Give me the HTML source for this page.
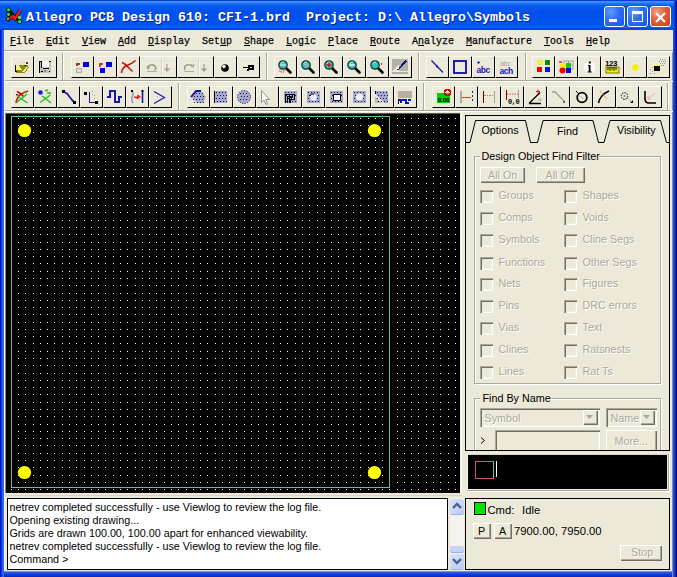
<!DOCTYPE html><html><head><meta charset="utf-8"><style>
*{margin:0;padding:0;box-sizing:border-box}
html,body{width:677px;height:577px;overflow:hidden;background:#ECE9D8}
body{position:relative;font-family:"Liberation Sans",sans-serif}
.a{position:absolute}
.mono{font-family:"Liberation Mono",monospace}
.ui{font-family:"Liberation Sans",sans-serif;font-size:10.75px;color:#000;white-space:pre;line-height:13px}
.dis{color:#ACA899;text-shadow:1px 1px 0 #fff}
</style></head><body>

<div class="a" style="left:0;top:0;width:677px;height:30px;background:linear-gradient(to bottom,#0A40C8 0px,#0A40C8 1px,#3C8CFF 1px,#3C8CFF 3px,#1A6EFA 3px,#1A6EFA 5px,#0858EE 5px,#0656EE 9px,#0050EA 12px,#0052EE 18px,#0056F2 25px,#0060FF 26px,#0060FF 28px,#0048E0 28px,#0048E0 29px,#1A45B0 29px,#1A45B0 30px)"></div>
<div class="a" style="left:0px;top:30px;width:1px;height:547px;background:#0014D0"></div>
<div class="a" style="left:1px;top:30px;width:1px;height:547px;background:#0C30DC"></div>
<div class="a" style="left:2px;top:30px;width:1px;height:547px;background:#1E64FF"></div>
<div class="a" style="left:3px;top:30px;width:1px;height:547px;background:#2A6CE8"></div>
<div class="a" style="left:4px;top:30px;width:1px;height:22px;background:#F4F3EC"></div>
<div class="a" style="left:672px;top:30px;width:1px;height:547px;background:#8090B0"></div>
<div class="a" style="left:673px;top:30px;width:1px;height:547px;background:#2D4EC0"></div>
<div class="a" style="left:674px;top:30px;width:1px;height:547px;background:#1B38CC"></div>
<div class="a" style="left:675px;top:30px;width:1px;height:547px;background:#0A1DB8"></div>
<div class="a" style="left:676px;top:30px;width:1px;height:547px;background:#0012A0"></div>
<div class="a" style="left:674px;top:1px;width:1px;height:29px;background:#0A3AD8"></div>
<div class="a" style="left:675px;top:1px;width:1px;height:29px;background:#0A28C8"></div>
<div class="a" style="left:676px;top:1px;width:1px;height:29px;background:#0012A0"></div>
<div class="a" style="left:4px;top:571px;width:668px;height:1px;background:#7890D0"></div>
<div class="a" style="left:4px;top:572px;width:668px;height:1px;background:#2A58E8"></div>
<div class="a" style="left:4px;top:573px;width:668px;height:1px;background:#1A48E0"></div>
<div class="a" style="left:4px;top:574px;width:668px;height:1px;background:#1040D8"></div>
<div class="a" style="left:4px;top:575px;width:668px;height:1px;background:#0A36CC"></div>
<div class="a" style="left:4px;top:576px;width:668px;height:1px;background:#0A2CC0"></div>
<svg class="a" style="left:4px;top:6px" width="20" height="20" viewBox="0 0 20 20">
<path d="M4.5 3.8L15.6 15.6M4.5 8.5L9 8.5" stroke="#081808" stroke-width="3" fill="none"/>
<path d="M3 14.5L9 10L11 12.5L16 4.5" stroke="#300818" stroke-width="3.6" fill="none"/>
<path d="M3 14.5L9 10L11 12.5L16 4.5" stroke="#F02010" stroke-width="2.2" fill="none"/>
<circle cx="4.5" cy="3.8" r="2" fill="#30E040" stroke="#000" stroke-width="0.8"/><circle cx="4.5" cy="8.5" r="2" fill="#30E040" stroke="#000" stroke-width="0.8"/><circle cx="4" cy="12.8" r="1.7" fill="#80D040" stroke="#000" stroke-width="0.8"/>
<circle cx="15.5" cy="11.4" r="1.7" fill="#80D040"/><circle cx="15.6" cy="15.6" r="2.1" fill="#30E040" stroke="#000" stroke-width="0.8"/>
</svg>
<div class="a mono" style="left:26px;top:8px;font-size:13.33px;font-weight:bold;color:#fff;white-space:pre;line-height:20px;text-shadow:1px 1px 0 #0A1E8C">Allegro PCB Design 610: CFI-1.brd  Project: D:\ Allegro\Symbols</div>
<div class="a" style="left:604px;top:6px;width:21px;height:21px;border:1px solid #fff;border-radius:3px;background:radial-gradient(circle at 30% 25%,#5C9BFF 0,#2D6EF5 45%,#1A55E0 100%)"><div class="a" style="left:4px;top:12px;width:8px;height:3px;background:#fff"></div></div>
<div class="a" style="left:627px;top:6px;width:21px;height:21px;border:1px solid #fff;border-radius:3px;background:radial-gradient(circle at 30% 25%,#5C9BFF 0,#2D6EF5 45%,#1A55E0 100%)"><div class="a" style="left:4px;top:4px;width:11px;height:11px;border:1px solid #fff;border-top-width:3px"></div></div>
<div class="a" style="left:650px;top:6px;width:21px;height:21px;border:1px solid #fff;border-radius:3px;background:radial-gradient(circle at 30% 25%,#F0A080 0,#E0603A 45%,#C8401E 100%)"><svg class="a" style="left:4px;top:5px" width="11" height="11"><path d="M1 1 L10 10 M10 1 L1 10" stroke="#fff" stroke-width="2.2"/></svg></div>
<div class="a" style="left:4px;top:30px;width:669px;height:20px;background:#ECE9D8"></div>
<div class="a" style="left:4px;top:50px;width:669px;height:1px;background:#ACA899"></div>
<div class="a" style="left:4px;top:51px;width:669px;height:1px;background:#fff"></div>
<div class="a mono" style="left:10px;top:33.8px;font-size:11px;line-height:14px;color:#000;white-space:pre;transform:scaleX(0.90909);transform-origin:0 0;-webkit-text-stroke:0.25px #000"><span style="text-decoration:underline">F</span>ile</div>
<div class="a mono" style="left:46px;top:33.8px;font-size:11px;line-height:14px;color:#000;white-space:pre;transform:scaleX(0.90909);transform-origin:0 0;-webkit-text-stroke:0.25px #000"><span style="text-decoration:underline">E</span>dit</div>
<div class="a mono" style="left:82px;top:33.8px;font-size:11px;line-height:14px;color:#000;white-space:pre;transform:scaleX(0.90909);transform-origin:0 0;-webkit-text-stroke:0.25px #000"><span style="text-decoration:underline">V</span>iew</div>
<div class="a mono" style="left:118px;top:33.8px;font-size:11px;line-height:14px;color:#000;white-space:pre;transform:scaleX(0.90909);transform-origin:0 0;-webkit-text-stroke:0.25px #000"><span style="text-decoration:underline">A</span>dd</div>
<div class="a mono" style="left:148px;top:33.8px;font-size:11px;line-height:14px;color:#000;white-space:pre;transform:scaleX(0.90909);transform-origin:0 0;-webkit-text-stroke:0.25px #000"><span style="text-decoration:underline">D</span>isplay</div>
<div class="a mono" style="left:202px;top:33.8px;font-size:11px;line-height:14px;color:#000;white-space:pre;transform:scaleX(0.90909);transform-origin:0 0;-webkit-text-stroke:0.25px #000">Set<span style="text-decoration:underline">u</span>p</div>
<div class="a mono" style="left:244px;top:33.8px;font-size:11px;line-height:14px;color:#000;white-space:pre;transform:scaleX(0.90909);transform-origin:0 0;-webkit-text-stroke:0.25px #000"><span style="text-decoration:underline">S</span>hape</div>
<div class="a mono" style="left:286px;top:33.8px;font-size:11px;line-height:14px;color:#000;white-space:pre;transform:scaleX(0.90909);transform-origin:0 0;-webkit-text-stroke:0.25px #000"><span style="text-decoration:underline">L</span>ogic</div>
<div class="a mono" style="left:328px;top:33.8px;font-size:11px;line-height:14px;color:#000;white-space:pre;transform:scaleX(0.90909);transform-origin:0 0;-webkit-text-stroke:0.25px #000"><span style="text-decoration:underline">P</span>lace</div>
<div class="a mono" style="left:370px;top:33.8px;font-size:11px;line-height:14px;color:#000;white-space:pre;transform:scaleX(0.90909);transform-origin:0 0;-webkit-text-stroke:0.25px #000"><span style="text-decoration:underline">R</span>oute</div>
<div class="a mono" style="left:412px;top:33.8px;font-size:11px;line-height:14px;color:#000;white-space:pre;transform:scaleX(0.90909);transform-origin:0 0;-webkit-text-stroke:0.25px #000">A<span style="text-decoration:underline">n</span>alyze</div>
<div class="a mono" style="left:466px;top:33.8px;font-size:11px;line-height:14px;color:#000;white-space:pre;transform:scaleX(0.90909);transform-origin:0 0;-webkit-text-stroke:0.25px #000"><span style="text-decoration:underline">M</span>anufacture</div>
<div class="a mono" style="left:544px;top:33.8px;font-size:11px;line-height:14px;color:#000;white-space:pre;transform:scaleX(0.90909);transform-origin:0 0;-webkit-text-stroke:0.25px #000"><span style="text-decoration:underline">T</span>ools</div>
<div class="a mono" style="left:586px;top:33.8px;font-size:11px;line-height:14px;color:#000;white-space:pre;transform:scaleX(0.90909);transform-origin:0 0;-webkit-text-stroke:0.25px #000"><span style="text-decoration:underline">H</span>elp</div>
<div class="a" style="left:4px;top:80px;width:669px;height:1px;background:#ACA899"></div>
<div class="a" style="left:4px;top:81px;width:669px;height:1px;background:#fff"></div>
<div class="a" style="left:4px;top:110px;width:669px;height:1px;background:#ACA899"></div>
<div class="a" style="left:4px;top:111px;width:669px;height:1px;background:#fff"></div>
<div class="a" style="left:62px;top:53px;width:1px;height:27px;background:#ACA899"></div>
<div class="a" style="left:63px;top:53px;width:1px;height:27px;background:#fff"></div>
<div class="a" style="left:266px;top:53px;width:1px;height:27px;background:#ACA899"></div>
<div class="a" style="left:267px;top:53px;width:1px;height:27px;background:#fff"></div>
<div class="a" style="left:418px;top:53px;width:1px;height:27px;background:#ACA899"></div>
<div class="a" style="left:419px;top:53px;width:1px;height:27px;background:#fff"></div>
<div class="a" style="left:525px;top:53px;width:1px;height:27px;background:#ACA899"></div>
<div class="a" style="left:526px;top:53px;width:1px;height:27px;background:#fff"></div>
<div class="a" style="left:178px;top:83px;width:1px;height:27px;background:#ACA899"></div>
<div class="a" style="left:179px;top:83px;width:1px;height:27px;background:#fff"></div>
<div class="a" style="left:423px;top:83px;width:1px;height:27px;background:#ACA899"></div>
<div class="a" style="left:424px;top:83px;width:1px;height:27px;background:#fff"></div>
<div class="a" style="left:667px;top:83px;width:1px;height:27px;background:#ACA899"></div>
<div class="a" style="left:668px;top:83px;width:1px;height:27px;background:#fff"></div>
<div class="a" style="left:11px;top:56px;width:23px;height:22px;border-left:1px solid #F7F6F0;border-top:1px solid #F7F6F0;border-right:1px solid #000;border-bottom:1px solid #000;background:#ECE9D8"><svg class="a" style="left:-1px;top:-1px" width="23" height="22" viewBox="0 0 23 22" shape-rendering="crispEdges"><path d="M5 9h11l1 1v1h1l-4 6H5z" fill="#8A8A08"/><path d="M5 9h3l3 5H5z" fill="#F4F08C"/><path d="M11 16l4-5h2l-3 5z" fill="#E8E890"/><rect x="4" y="9" width="1" height="7" fill="#000"/><rect x="4" y="15" width="2" height="1" fill="#000"/><rect x="13" y="9" width="2" height="1" fill="#303000"/><rect x="15" y="6" width="2" height="2" fill="#603030"/><rect x="10" y="6" width="4" height="1" fill="#F0C8C8"/></svg></div>
<div class="a" style="left:34px;top:56px;width:23px;height:22px;border-left:1px solid #F7F6F0;border-top:1px solid #F7F6F0;border-right:1px solid #000;border-bottom:1px solid #000;background:#ECE9D8"><svg class="a" style="left:-1px;top:-1px" width="23" height="22" viewBox="0 0 23 22" shape-rendering="crispEdges"><rect x="6" y="5" width="11" height="12" fill="#C4C2BA"/><rect x="8" y="5" width="7" height="6" fill="#FAFAFA"/><rect x="5" y="5" width="1" height="12" fill="#000"/><rect x="7" y="5" width="1" height="7" fill="#000"/><rect x="6" y="5" width="2" height="1" fill="#000"/><rect x="15" y="5" width="2" height="1" fill="#000"/><rect x="9" y="12" width="6" height="1" fill="#000"/><rect x="7" y="15" width="2" height="1" fill="#000"/><rect x="15" y="15" width="1" height="1" fill="#000"/><rect x="10" y="14" width="2" height="2" fill="#8A8880"/></svg></div>
<div class="a" style="left:71px;top:56px;width:23px;height:22px;border-left:1px solid #F7F6F0;border-top:1px solid #F7F6F0;border-right:1px solid #000;border-bottom:1px solid #000;background:#ECE9D8"><svg class="a" style="left:-1px;top:-1px" width="23" height="22" viewBox="0 0 23 22" shape-rendering="crispEdges"><rect x="12" y="6" width="6" height="5" fill="#0000F0"/><path d="M6 10V8h3" stroke="#904030" stroke-width="1.4" fill="none"/><rect x="5" y="12" width="6" height="5" fill="#B0ADA0"/><rect x="6" y="13" width="4" height="3" fill="#E0DDD0"/></svg></div>
<div class="a" style="left:94px;top:56px;width:23px;height:22px;border-left:1px solid #F7F6F0;border-top:1px solid #F7F6F0;border-right:1px solid #000;border-bottom:1px solid #000;background:#ECE9D8"><svg class="a" style="left:-1px;top:-1px" width="23" height="22" viewBox="0 0 23 22" shape-rendering="crispEdges"><rect x="12" y="6" width="6" height="5" fill="#0000F0"/><rect x="6" y="12" width="5" height="5" fill="#0000F0"/><path d="M6 11V8h3" stroke="#C04030" stroke-width="1.4" fill="none"/></svg></div>
<div class="a" style="left:117px;top:56px;width:23px;height:22px;border-left:1px solid #F7F6F0;border-top:1px solid #F7F6F0;border-right:1px solid #000;border-bottom:1px solid #000;background:#ECE9D8"><svg class="a" style="left:-1px;top:-1px" width="23" height="22" viewBox="0 0 23 22"><path d="M4.5 17Q5 11 11 9Q15 7.5 18.5 4.5" stroke="#C01010" stroke-width="1.6" fill="none"/><path d="M5 6.5Q9 8 12 12L15.5 15.5" stroke="#C01010" stroke-width="1.4" fill="none"/></svg></div>
<div class="a" style="left:140px;top:56px;width:37px;height:22px;border-left:1px solid #F7F6F0;border-top:1px solid #F7F6F0;border-right:1px solid #000;border-bottom:1px solid #000;background:#ECE9D8"><svg class="a" style="left:-1px;top:-1px" width="37" height="22" viewBox="0 0 37 22"><path d="M8 13.5Q7 9.5 11 9Q14 8.5 15.5 11Q16.5 13 14.5 14" stroke="#A09E90" stroke-width="1.6" fill="none"/><path d="M6.5 10.5l2 1.5l1.5-2.5" stroke="#A09E90" stroke-width="1.2" fill="none"/><path d="M7 15.5h10" stroke="#B0AEA0" stroke-width="1"/><rect x="21" y="3" width="1" height="17" fill="#D6D3C4"/><rect x="22" y="3" width="1" height="17" fill="#F6F5F0"/><path d="M27 8v5M25 13h4l-2 2z" stroke="#A09E90" stroke-width="1.2" fill="#A09E90"/></svg></div>
<div class="a" style="left:177px;top:56px;width:37px;height:22px;border-left:1px solid #F7F6F0;border-top:1px solid #F7F6F0;border-right:1px solid #000;border-bottom:1px solid #000;background:#ECE9D8"><svg class="a" style="left:-1px;top:-1px" width="37" height="22" viewBox="0 0 37 22"><path d="M8 14Q6.5 10 10 9Q13.5 8 15.5 10.5" stroke="#A09E90" stroke-width="1.6" fill="none"/><path d="M14 8.5l2 2.5l1-3" stroke="#A09E90" stroke-width="1.2" fill="none"/><path d="M7 15.5h10" stroke="#B0AEA0" stroke-width="1"/><rect x="21" y="3" width="1" height="17" fill="#D6D3C4"/><rect x="22" y="3" width="1" height="17" fill="#F6F5F0"/><path d="M27 8v5M25 13h4l-2 2z" stroke="#A09E90" stroke-width="1.2" fill="#A09E90"/></svg></div>
<div class="a" style="left:214px;top:56px;width:23px;height:22px;border-left:1px solid #F7F6F0;border-top:1px solid #F7F6F0;border-right:1px solid #000;border-bottom:1px solid #000;background:#ECE9D8"><svg class="a" style="left:-1px;top:-1px" width="23" height="22" viewBox="0 0 23 22"><circle cx="11" cy="12" r="3.8" fill="#000"/><circle cx="10" cy="10.5" r="1.8" fill="#fff"/></svg></div>
<div class="a" style="left:237px;top:56px;width:23px;height:22px;border-left:1px solid #F7F6F0;border-top:1px solid #F7F6F0;border-right:1px solid #000;border-bottom:1px solid #000;background:#ECE9D8"><svg class="a" style="left:-1px;top:-1px" width="23" height="22" viewBox="0 0 23 22" shape-rendering="crispEdges"><rect x="6" y="11" width="5" height="1" fill="#000"/><rect x="11" y="9" width="6" height="5" fill="#000"/><rect x="13" y="11" width="2" height="1" fill="#ECE9D8"/><rect x="10" y="13" width="2" height="2" fill="#000"/></svg></div>
<div class="a" style="left:274px;top:56px;width:23px;height:22px;border-left:1px solid #F7F6F0;border-top:1px solid #F7F6F0;border-right:1px solid #000;border-bottom:1px solid #000;background:#ECE9D8"><svg class="a" style="left:-1px;top:-1px" width="23" height="22" viewBox="0 0 23 22"><path d="M12 12L16.5 16.5" stroke="#000" stroke-width="2.6" stroke-linecap="round"/><circle cx="9" cy="9" r="4.2" fill="#2EC8B8" stroke="#103030" stroke-width="1.2"/><path d="M6.5 7.5Q8 5.8 10 6" stroke="#B8F8F0" stroke-width="1" fill="none"/><rect x="6" y="12" width="4" height="4" fill="none" stroke="#D02020" stroke-width="1" stroke-dasharray="1 1"/><path d="M6 9h6" stroke="#C0E8F0" stroke-width="1.4"/></svg></div>
<div class="a" style="left:297px;top:56px;width:23px;height:22px;border-left:1px solid #F7F6F0;border-top:1px solid #F7F6F0;border-right:1px solid #000;border-bottom:1px solid #000;background:#ECE9D8"><svg class="a" style="left:-1px;top:-1px" width="23" height="22" viewBox="0 0 23 22"><path d="M12 12L16.5 16.5" stroke="#000" stroke-width="2.6" stroke-linecap="round"/><circle cx="9" cy="9" r="4.2" fill="#2EC8B8" stroke="#103030" stroke-width="1.2"/><path d="M6.5 7.5Q8 5.8 10 6" stroke="#B8F8F0" stroke-width="1" fill="none"/><path d="M8 7.5v3M10 7.5v3" stroke="#F0A0C0" stroke-width="1"/></svg></div>
<div class="a" style="left:320px;top:56px;width:23px;height:22px;border-left:1px solid #F7F6F0;border-top:1px solid #F7F6F0;border-right:1px solid #000;border-bottom:1px solid #000;background:#ECE9D8"><svg class="a" style="left:-1px;top:-1px" width="23" height="22" viewBox="0 0 23 22"><path d="M12 12L16.5 16.5" stroke="#000" stroke-width="2.6" stroke-linecap="round"/><circle cx="9" cy="9" r="4.2" fill="#2EC8B8" stroke="#103030" stroke-width="1.2"/><path d="M6.5 7.5Q8 5.8 10 6" stroke="#B8F8F0" stroke-width="1" fill="none"/><path d="M9 6.5v5M6.5 9h5" stroke="#D01010" stroke-width="1.5"/></svg></div>
<div class="a" style="left:343px;top:56px;width:23px;height:22px;border-left:1px solid #F7F6F0;border-top:1px solid #F7F6F0;border-right:1px solid #000;border-bottom:1px solid #000;background:#ECE9D8"><svg class="a" style="left:-1px;top:-1px" width="23" height="22" viewBox="0 0 23 22"><path d="M12 12L16.5 16.5" stroke="#000" stroke-width="2.6" stroke-linecap="round"/><circle cx="9" cy="9" r="4.2" fill="#2EC8B8" stroke="#103030" stroke-width="1.2"/><path d="M6.5 7.5Q8 5.8 10 6" stroke="#B8F8F0" stroke-width="1" fill="none"/><path d="M6.3 9h5.4" stroke="#F0F0F0" stroke-width="1.6"/></svg></div>
<div class="a" style="left:366px;top:56px;width:23px;height:22px;border-left:1px solid #F7F6F0;border-top:1px solid #F7F6F0;border-right:1px solid #000;border-bottom:1px solid #000;background:#ECE9D8"><svg class="a" style="left:-1px;top:-1px" width="23" height="22" viewBox="0 0 23 22"><path d="M12 12L16.5 16.5" stroke="#000" stroke-width="2.6" stroke-linecap="round"/><circle cx="9" cy="9" r="4.2" fill="#2EC8B8" stroke="#103030" stroke-width="1.2"/><path d="M6.5 7.5Q8 5.8 10 6" stroke="#B8F8F0" stroke-width="1" fill="none"/><rect x="15" y="7" width="1" height="2" fill="#E02020"/></svg></div>
<div class="a" style="left:389px;top:56px;width:23px;height:22px;border-left:1px solid #F7F6F0;border-top:1px solid #F7F6F0;border-right:1px solid #000;border-bottom:1px solid #000;background:#ECE9D8"><svg class="a" style="left:-1px;top:-1px" width="23" height="22" viewBox="0 0 23 22" shape-rendering="crispEdges"><rect x="3" y="3" width="16" height="12" fill="#B4B2A8"/><path d="M3 15L10 8V15Z" fill="#F8F8E8"/><path d="M3 15L7 11V15Z" fill="#ECE9D8"/><rect x="3" y="16" width="16" height="2" fill="#B0AEA2"/><path d="M9 12l3-3l1 1l-3 3zM12 9l4-5l2 2l-5 4z" fill="#101080"/><path d="M8 13l2 1" stroke="#101080"/></svg></div>
<div class="a" style="left:426px;top:56px;width:23px;height:22px;border-left:1px solid #F7F6F0;border-top:1px solid #F7F6F0;border-right:1px solid #000;border-bottom:1px solid #000;background:#ECE9D8"><svg class="a" style="left:-1px;top:-1px" width="23" height="22" viewBox="0 0 23 22"><path d="M5.5 4.5L17 16.5" stroke="#2020B0" stroke-width="1.4"/><rect x="10" y="9.5" width="2" height="2" fill="#2020B0"/></svg></div>
<div class="a" style="left:449px;top:56px;width:23px;height:22px;border-left:1px solid #F7F6F0;border-top:1px solid #F7F6F0;border-right:1px solid #000;border-bottom:1px solid #000;background:#ECE9D8"><svg class="a" style="left:-1px;top:-1px" width="23" height="22" viewBox="0 0 23 22" shape-rendering="crispEdges"><rect x="5" y="5" width="12" height="12" fill="none" stroke="#2020A8" stroke-width="2"/></svg></div>
<div class="a" style="left:472px;top:56px;width:23px;height:22px;border-left:1px solid #F7F6F0;border-top:1px solid #F7F6F0;border-right:1px solid #000;border-bottom:1px solid #000;background:#ECE9D8"><svg class="a" style="left:-1px;top:-1px" width="23" height="22" viewBox="0 0 23 22"><text x="4.5" y="17" font-family="Liberation Sans" font-weight="bold" font-size="8.5" fill="#1818C0" letter-spacing="-0.5" transform="translate(0,-1.5) scale(1,1.1)">abc</text><path d="M6.5 5l1.5 1.5L6.5 8L5 6.5z" fill="#1818C0"/></svg></div>
<div class="a" style="left:495px;top:56px;width:23px;height:22px;border-left:1px solid #F7F6F0;border-top:1px solid #F7F6F0;border-right:1px solid #000;border-bottom:1px solid #000;background:#ECE9D8"><svg class="a" style="left:-1px;top:-1px" width="23" height="22" viewBox="0 0 23 22"><text x="5" y="10" font-family="Liberation Sans" font-size="7" fill="#A8A698" letter-spacing="-0.3">abc</text><text x="4.5" y="18" font-family="Liberation Sans" font-weight="bold" font-size="8.5" fill="#1818C0" letter-spacing="-0.5">ach</text></svg></div>
<div class="a" style="left:532px;top:56px;width:23px;height:22px;border-left:1px solid #F7F6F0;border-top:1px solid #F7F6F0;border-right:1px solid #000;border-bottom:1px solid #000;background:#ECE9D8"><svg class="a" style="left:-1px;top:-1px" width="23" height="22" viewBox="0 0 23 22" shape-rendering="crispEdges"><rect x="5" y="4" width="6" height="5" fill="#E8F040"/><rect x="13" y="4" width="5" height="5" fill="#109010"/><rect x="15" y="6" width="1" height="1" fill="#003000"/><rect x="5" y="11" width="5" height="5" fill="#F00000"/><rect x="13" y="11" width="5" height="5" fill="#0010F0"/></svg></div>
<div class="a" style="left:555px;top:56px;width:23px;height:22px;border-left:1px solid #F7F6F0;border-top:1px solid #F7F6F0;border-right:1px solid #000;border-bottom:1px solid #000;background:#ECE9D8"><svg class="a" style="left:-1px;top:-1px" width="23" height="22" viewBox="0 0 23 22"><rect x="9" y="5" width="9" height="8" fill="#E8E8E8" stroke="#A0A0A0" stroke-width="1"/><path d="M9 9h9M13.5 5v8" stroke="#A0A0A0"/><rect x="5" y="8" width="6" height="5" fill="#F0F020"/><rect x="11" y="7" width="5" height="6" fill="#20C020"/><circle cx="7.5" cy="14.5" r="3" fill="#F00000"/><rect x="11" y="12" width="5" height="5" fill="#0000F0"/><path d="M4 6h3" stroke="#D02020" stroke-width="1.4"/></svg></div>
<div class="a" style="left:578px;top:56px;width:23px;height:22px;border-left:1px solid #F7F6F0;border-top:1px solid #F7F6F0;border-right:1px solid #000;border-bottom:1px solid #000;background:#ECE9D8"><svg class="a" style="left:-1px;top:-1px" width="23" height="22" viewBox="0 0 23 22"><circle cx="11.5" cy="11.5" r="6" fill="#FAFAF6"/><path d="M10 9h2.5v6.5h1.2v1h-4.2v-1h1.2v-5.5h-0.7z" fill="#000"/><rect x="10.8" y="5.5" width="2" height="2" fill="#000"/></svg></div>
<div class="a" style="left:601px;top:56px;width:23px;height:22px;border-left:1px solid #F7F6F0;border-top:1px solid #F7F6F0;border-right:1px solid #000;border-bottom:1px solid #000;background:#ECE9D8"><svg class="a" style="left:-1px;top:-1px" width="23" height="22" viewBox="0 0 23 22"><text x="4" y="10" font-family="Liberation Sans" font-weight="bold" font-size="8" fill="#000" letter-spacing="-0.4">123</text><rect x="5" y="11" width="13" height="6" fill="#F0F000" stroke="#606000" stroke-width="0.8"/><path d="M7 11v3M9 11v4M11 11v3M13 11v4M15 11v3" stroke="#000" stroke-width="0.9"/></svg></div>
<div class="a" style="left:624px;top:56px;width:23px;height:22px;border-left:1px solid #F7F6F0;border-top:1px solid #F7F6F0;border-right:1px solid #000;border-bottom:1px solid #000;background:#ECE9D8"><svg class="a" style="left:-1px;top:-1px" width="23" height="22" viewBox="0 0 23 22"><circle cx="11.5" cy="11.5" r="3.3" fill="#F0F000"/></svg></div>
<div class="a" style="left:647px;top:56px;width:23px;height:22px;border-left:1px solid #F7F6F0;border-top:1px solid #F7F6F0;border-right:1px solid #000;border-bottom:1px solid #000;background:#ECE9D8"><svg class="a" style="left:-1px;top:-1px" width="23" height="22" viewBox="0 0 23 22"><circle cx="10" cy="12" r="4.5" fill="#F8F070" opacity="0.8"/><path d="M13 3h1v1h-1zM15 3h1v1h-1zM17 3h1v1h-1zM12 5h1v1h-1zM14 5h1v1h-1zM16 5h1v1h-1zM18 5h1v1h-1zM13 7h1v1h-1zM15 7h1v1h-1zM17 7h1v1h-1zM14 9h1v1h-1zM16 9h1v1h-1zM3 13h1v1h-1zM5 15h1v1h-1zM7 17h1v1h-1zM3 17h1v1h-1zM5 11h1v1h-1z" fill="#909090"/><rect x="7" y="10" width="6" height="5" fill="#000"/></svg></div>
<div class="a" style="left:11px;top:86px;width:23px;height:22px;border-left:1px solid #F7F6F0;border-top:1px solid #F7F6F0;border-right:1px solid #000;border-bottom:1px solid #000;background:#ECE9D8"><svg class="a" style="left:-1px;top:-1px" width="23" height="22" viewBox="0 0 23 22"><path d="M5 17Q6 11 10 8Q14 6 17 5" stroke="#D01010" stroke-width="1.6" fill="none"/><path d="M6 5.5l4 2.5 3 3" stroke="#D01010" stroke-width="1.6" fill="none"/><path d="M5.5 16.5L16 8M7 10.5L16.5 17" stroke="#20C020" stroke-width="1.5" fill="none"/><path d="M12 6.5l3 -1" stroke="#20C020" stroke-width="1.3"/><rect x="5" y="8" width="2" height="1.5" fill="#303060"/></svg></div>
<div class="a" style="left:34px;top:86px;width:23px;height:22px;border-left:1px solid #F7F6F0;border-top:1px solid #F7F6F0;border-right:1px solid #000;border-bottom:1px solid #000;background:#ECE9D8"><svg class="a" style="left:-1px;top:-1px" width="23" height="22" viewBox="0 0 23 22"><circle cx="6.5" cy="6.5" r="2.3" fill="#1020E0"/><path d="M6 16.5L16.5 9M8 10L17 17M11 5l3-1M13 7l4 0" stroke="#20C020" stroke-width="1.5" fill="none"/></svg></div>
<div class="a" style="left:57px;top:86px;width:23px;height:22px;border-left:1px solid #F7F6F0;border-top:1px solid #F7F6F0;border-right:1px solid #000;border-bottom:1px solid #000;background:#ECE9D8"><svg class="a" style="left:-1px;top:-1px" width="23" height="22" viewBox="0 0 23 22"><rect x="5" y="4" width="3" height="3" fill="#000"/><path d="M7 6L10 7.5L15 14L17 16" stroke="#1818B0" stroke-width="1.8" fill="none"/><rect x="16" y="15" width="3" height="3" fill="#000"/></svg></div>
<div class="a" style="left:80px;top:86px;width:23px;height:22px;border-left:1px solid #F7F6F0;border-top:1px solid #F7F6F0;border-right:1px solid #000;border-bottom:1px solid #000;background:#ECE9D8"><svg class="a" style="left:-1px;top:-1px" width="23" height="22" viewBox="0 0 23 22" shape-rendering="crispEdges"><rect x="4" y="6" width="3" height="3" fill="#000"/><path d="M9 6h1v10h5v1H9z" fill="#1818B0"/><rect x="15" y="15" width="3" height="3" fill="#000"/><path d="M12 5h1v1h-1zM12 8h1v1h-1zM14 9h1v1h-1zM14 12h1v1h-1z" fill="#A0A0A0"/></svg></div>
<div class="a" style="left:103px;top:86px;width:23px;height:22px;border-left:1px solid #F7F6F0;border-top:1px solid #F7F6F0;border-right:1px solid #000;border-bottom:1px solid #000;background:#ECE9D8"><svg class="a" style="left:-1px;top:-1px" width="23" height="22" viewBox="0 0 23 22" shape-rendering="crispEdges"><path d="M4 11h3V5h5v11h4v-5h3" stroke="#1818B0" stroke-width="2" fill="none"/></svg></div>
<div class="a" style="left:126px;top:86px;width:23px;height:22px;border-left:1px solid #F7F6F0;border-top:1px solid #F7F6F0;border-right:1px solid #000;border-bottom:1px solid #000;background:#ECE9D8"><svg class="a" style="left:-1px;top:-1px" width="23" height="22" viewBox="0 0 23 22"><path d="M6 4.5Q8 8 6 11Q5 14 7 17" stroke="#8090C0" stroke-width="1.4" fill="none"/><path d="M16.5 5v12" stroke="#1818B0" stroke-width="1.6"/><path d="M8 11h6l-2-1.5v3z" stroke="#E02020" stroke-width="1.2" fill="#E02020"/><rect x="5" y="4" width="2" height="2" fill="#000"/><rect x="15.5" y="4" width="2" height="2" fill="#000"/></svg></div>
<div class="a" style="left:149px;top:86px;width:23px;height:22px;border-left:1px solid #F7F6F0;border-top:1px solid #F7F6F0;border-right:1px solid #000;border-bottom:1px solid #000;background:#ECE9D8"><svg class="a" style="left:-1px;top:-1px" width="23" height="22" viewBox="0 0 23 22"><path d="M5 5.5L15.5 11.5L5 17.5" stroke="#1818B0" stroke-width="1.2" fill="none"/><rect x="8" y="10" width="1" height="1" fill="#A0A0C0"/></svg></div>
<div class="a" style="left:187px;top:86px;width:23px;height:22px;border-left:1px solid #F7F6F0;border-top:1px solid #F7F6F0;border-right:1px solid #000;border-bottom:1px solid #000;background:#ECE9D8"><svg class="a" style="left:-1px;top:-1px" width="23" height="22" viewBox="0 0 23 22"><path d="M4 11L9 5H14L19 11L16 17H10Z" fill="#A8A8CC"/><path d="M4 11L9 5H14" stroke="#1010A0" stroke-width="1.8" fill="none"/><path d="M6 7h1v1h-1zM9 7h1v1h-1zM12 7h1v1h-1zM15 7h1v1h-1zM7 10h1v1h-1zM10 10h1v1h-1zM13 10h1v1h-1zM16 10h1v1h-1zM6 13h1v1h-1zM9 13h1v1h-1zM12 13h1v1h-1zM15 13h1v1h-1zM7 16h1v1h-1zM10 16h1v1h-1zM13 16h1v1h-1zM16 16h1v1h-1z" fill="#101060"/></svg></div>
<div class="a" style="left:210px;top:86px;width:23px;height:22px;border-left:1px solid #F7F6F0;border-top:1px solid #F7F6F0;border-right:1px solid #000;border-bottom:1px solid #000;background:#ECE9D8"><svg class="a" style="left:-1px;top:-1px" width="23" height="22" viewBox="0 0 23 22" shape-rendering="crispEdges"><rect x="4" y="5" width="13" height="12" fill="#A8A8CC"/><rect x="4" y="5" width="1" height="12" fill="#000"/><path d="M6 6h1v1h-1zM9 6h1v1h-1zM12 6h1v1h-1zM15 6h1v1h-1zM7 9h1v1h-1zM10 9h1v1h-1zM13 9h1v1h-1zM16 9h1v1h-1zM6 12h1v1h-1zM9 12h1v1h-1zM12 12h1v1h-1zM15 12h1v1h-1zM7 15h1v1h-1zM10 15h1v1h-1zM13 15h1v1h-1zM16 15h1v1h-1z" fill="#101060"/></svg></div>
<div class="a" style="left:233px;top:86px;width:23px;height:22px;border-left:1px solid #F7F6F0;border-top:1px solid #F7F6F0;border-right:1px solid #000;border-bottom:1px solid #000;background:#ECE9D8"><svg class="a" style="left:-1px;top:-1px" width="23" height="22" viewBox="0 0 23 22"><circle cx="11" cy="11" r="6.5" fill="#A8A8CC"/><circle cx="11" cy="11" r="6.5" fill="none" stroke="#101060" stroke-width="1" stroke-dasharray="1.2 1.5"/><path d="M7 7h1v1h-1zM10 7h1v1h-1zM13 7h1v1h-1zM8 10h1v1h-1zM11 10h1v1h-1zM14 10h1v1h-1zM7 13h1v1h-1zM10 13h1v1h-1zM13 13h1v1h-1z" fill="#101060"/></svg></div>
<div class="a" style="left:256px;top:86px;width:23px;height:22px;border-left:1px solid #F7F6F0;border-top:1px solid #F7F6F0;border-right:1px solid #000;border-bottom:1px solid #000;background:#ECE9D8"><svg class="a" style="left:-1px;top:-1px" width="23" height="22" viewBox="0 0 23 22"><path d="M5.5 4.5V16.5L8 14L10 18.5L11.5 18L9.8 13.5H13.5Z" fill="#fff" stroke="#909090" stroke-width="1"/></svg></div>
<div class="a" style="left:279px;top:86px;width:23px;height:22px;border-left:1px solid #F7F6F0;border-top:1px solid #F7F6F0;border-right:1px solid #000;border-bottom:1px solid #000;background:#ECE9D8"><svg class="a" style="left:-1px;top:-1px" width="23" height="22" viewBox="0 0 23 22" shape-rendering="crispEdges"><rect x="5" y="5" width="13" height="12" fill="#A8A8CC"/><path d="M6 6h1v1h-1zM9 6h1v1h-1zM12 6h1v1h-1zM15 6h1v1h-1zM7 9h1v1h-1zM10 9h1v1h-1zM13 9h1v1h-1zM16 9h1v1h-1zM6 12h1v1h-1zM9 12h1v1h-1zM12 12h1v1h-1zM15 12h1v1h-1zM7 15h1v1h-1zM10 15h1v1h-1zM13 15h1v1h-1zM16 15h1v1h-1z" fill="#101060"/><path d="M6 17V8h9v5h-4v4M8 17v-7h5v1h-3v6" stroke="#000" stroke-width="1" fill="none"/></svg></div>
<div class="a" style="left:302px;top:86px;width:23px;height:22px;border-left:1px solid #F7F6F0;border-top:1px solid #F7F6F0;border-right:1px solid #000;border-bottom:1px solid #000;background:#ECE9D8"><svg class="a" style="left:-1px;top:-1px" width="23" height="22" viewBox="0 0 23 22"><rect x="5" y="5" width="13" height="12" fill="#A8A8CC"/><path d="M6 6h1v1h-1zM9 6h1v1h-1zM12 6h1v1h-1zM15 6h1v1h-1zM7 9h1v1h-1zM10 9h1v1h-1zM13 9h1v1h-1zM16 9h1v1h-1zM6 12h1v1h-1zM9 12h1v1h-1zM12 12h1v1h-1zM15 12h1v1h-1zM7 15h1v1h-1zM10 15h1v1h-1zM13 15h1v1h-1zM16 15h1v1h-1z" fill="#101060"/><circle cx="11.5" cy="11.5" r="3.3" fill="#F0F0FF"/><path d="M8 10Q9 7 12 8" stroke="#000" stroke-width="1" fill="none"/></svg></div>
<div class="a" style="left:325px;top:86px;width:23px;height:22px;border-left:1px solid #F7F6F0;border-top:1px solid #F7F6F0;border-right:1px solid #000;border-bottom:1px solid #000;background:#ECE9D8"><svg class="a" style="left:-1px;top:-1px" width="23" height="22" viewBox="0 0 23 22" shape-rendering="crispEdges"><rect x="5" y="5" width="13" height="12" fill="#A8A8CC"/><path d="M6 6h1v1h-1zM9 6h1v1h-1zM12 6h1v1h-1zM15 6h1v1h-1zM7 9h1v1h-1zM10 9h1v1h-1zM13 9h1v1h-1zM16 9h1v1h-1zM6 12h1v1h-1zM9 12h1v1h-1zM12 12h1v1h-1zM15 12h1v1h-1zM7 15h1v1h-1zM10 15h1v1h-1zM13 15h1v1h-1zM16 15h1v1h-1z" fill="#101060"/><rect x="8" y="8" width="7" height="6" fill="#F8F8F8" stroke="#000" stroke-width="1"/></svg></div>
<div class="a" style="left:348px;top:86px;width:23px;height:22px;border-left:1px solid #F7F6F0;border-top:1px solid #F7F6F0;border-right:1px solid #000;border-bottom:1px solid #000;background:#ECE9D8"><svg class="a" style="left:-1px;top:-1px" width="23" height="22" viewBox="0 0 23 22"><rect x="5" y="5" width="13" height="12" fill="#A8A8CC"/><path d="M6 6h1v1h-1zM9 6h1v1h-1zM12 6h1v1h-1zM15 6h1v1h-1zM7 9h1v1h-1zM10 9h1v1h-1zM13 9h1v1h-1zM16 9h1v1h-1zM6 12h1v1h-1zM9 12h1v1h-1zM12 12h1v1h-1zM15 12h1v1h-1zM7 15h1v1h-1zM10 15h1v1h-1zM13 15h1v1h-1zM16 15h1v1h-1z" fill="#101060"/><circle cx="11.5" cy="11" r="3.6" fill="#F0F0FF"/></svg></div>
<div class="a" style="left:371px;top:86px;width:23px;height:22px;border-left:1px solid #F7F6F0;border-top:1px solid #F7F6F0;border-right:1px solid #000;border-bottom:1px solid #000;background:#ECE9D8"><svg class="a" style="left:-1px;top:-1px" width="23" height="22" viewBox="0 0 23 22" shape-rendering="crispEdges"><rect x="4" y="5" width="13" height="12" fill="#A8A8CC"/><path d="M4 17V8L13 17Z" fill="#ECE9D8"/><path d="M4 17V11L10 17Z" fill="#B8B8A8"/><path d="M6 6h1v1h-1zM9 6h1v1h-1zM12 6h1v1h-1zM15 6h1v1h-1zM7 9h1v1h-1zM10 9h1v1h-1zM13 9h1v1h-1zM16 9h1v1h-1zM6 12h1v1h-1zM9 12h1v1h-1zM12 12h1v1h-1zM15 12h1v1h-1zM7 15h1v1h-1zM10 15h1v1h-1zM13 15h1v1h-1zM16 15h1v1h-1z" fill="#101060"/><rect x="4" y="5" width="1" height="3" fill="#000"/></svg></div>
<div class="a" style="left:394px;top:86px;width:23px;height:22px;border-left:1px solid #F7F6F0;border-top:1px solid #F7F6F0;border-right:1px solid #000;border-bottom:1px solid #000;background:#ECE9D8"><svg class="a" style="left:-1px;top:-1px" width="23" height="22" viewBox="0 0 23 22" shape-rendering="crispEdges"><rect x="4" y="5" width="14" height="7" fill="#B4B0A4"/><path d="M4 13h14v5H4z" fill="#F0F0F8"/><path d="M4 14h3v3M7 14h3M10 14h2v3h3M14 14h3" stroke="#1010B0" stroke-width="1.3" fill="none"/><rect x="4" y="13" width="1" height="5" fill="#000"/></svg></div>
<div class="a" style="left:432px;top:86px;width:23px;height:22px;border-left:1px solid #F7F6F0;border-top:1px solid #F7F6F0;border-right:1px solid #000;border-bottom:1px solid #000;background:#ECE9D8"><svg class="a" style="left:-1px;top:-1px" width="23" height="22" viewBox="0 0 23 22" shape-rendering="crispEdges"><rect x="5" y="7" width="13" height="10" fill="#00D000"/><text x="6" y="16" font-family="Liberation Sans" font-size="6" font-weight="bold" fill="#000">0.00</text><circle cx="15.5" cy="6.5" r="2.8" fill="none" stroke="#E00000" stroke-width="1.5"/></svg></div>
<div class="a" style="left:455px;top:86px;width:23px;height:22px;border-left:1px solid #F7F6F0;border-top:1px solid #F7F6F0;border-right:1px solid #000;border-bottom:1px solid #000;background:#ECE9D8"><svg class="a" style="left:-1px;top:-1px" width="23" height="22" viewBox="0 0 23 22" shape-rendering="crispEdges"><rect x="5" y="5" width="2" height="12" fill="#A0B0A8"/><rect x="7" y="11" width="9" height="1" fill="#D04020"/><path d="M17 5h1v2h-1zM17 9h1v2h-1zM17 13h1v2h-1z" fill="#2020A0"/></svg></div>
<div class="a" style="left:478px;top:86px;width:23px;height:22px;border-left:1px solid #F7F6F0;border-top:1px solid #F7F6F0;border-right:1px solid #000;border-bottom:1px solid #000;background:#ECE9D8"><svg class="a" style="left:-1px;top:-1px" width="23" height="22" viewBox="0 0 23 22" shape-rendering="crispEdges"><rect x="5" y="5" width="1" height="12" fill="#600000"/><path d="M6 9h10" stroke="#C08080" stroke-width="1" stroke-dasharray="1.5 1"/><rect x="16" y="5" width="1" height="12" fill="#A0A0A0"/></svg></div>
<div class="a" style="left:501px;top:86px;width:23px;height:22px;border-left:1px solid #F7F6F0;border-top:1px solid #F7F6F0;border-right:1px solid #000;border-bottom:1px solid #000;background:#ECE9D8"><svg class="a" style="left:-1px;top:-1px" width="23" height="22" viewBox="0 0 23 22"><rect x="5" y="4" width="1" height="10" fill="#800000"/><path d="M6 8h11" stroke="#C06060" stroke-width="1" stroke-dasharray="1.5 1"/><rect x="17" y="4" width="1" height="8" fill="#A0A0A0"/><text x="7" y="18" font-family="Liberation Mono" font-weight="bold" font-size="7" fill="#000" letter-spacing="-0.5">0,0</text></svg></div>
<div class="a" style="left:524px;top:86px;width:23px;height:22px;border-left:1px solid #F7F6F0;border-top:1px solid #F7F6F0;border-right:1px solid #000;border-bottom:1px solid #000;background:#ECE9D8"><svg class="a" style="left:-1px;top:-1px" width="23" height="22" viewBox="0 0 23 22"><path d="M5 17.5H17M5 17.5L16 6.5" fill="none" stroke="#000" stroke-width="1.3"/><path d="M14 3.5v4M12 5.5h4" stroke="#E02020" stroke-width="1"/><text x="14" y="15" font-family="Liberation Sans" font-size="6" fill="#A0A0A0">a</text></svg></div>
<div class="a" style="left:547px;top:86px;width:23px;height:22px;border-left:1px solid #F7F6F0;border-top:1px solid #F7F6F0;border-right:1px solid #000;border-bottom:1px solid #000;background:#ECE9D8"><svg class="a" style="left:-1px;top:-1px" width="23" height="22" viewBox="0 0 23 22"><path d="M5 6L8 6L17 15" stroke="#A0A0A0" stroke-width="1.4" fill="none"/><rect x="16" y="15" width="2" height="2" fill="#606060"/></svg></div>
<div class="a" style="left:570px;top:86px;width:23px;height:22px;border-left:1px solid #F7F6F0;border-top:1px solid #F7F6F0;border-right:1px solid #000;border-bottom:1px solid #000;background:#ECE9D8"><svg class="a" style="left:-1px;top:-1px" width="23" height="22" viewBox="0 0 23 22"><circle cx="12" cy="11.5" r="4.8" fill="none" stroke="#000" stroke-width="1.8"/><path d="M6 5L9 8" stroke="#000" stroke-width="1"/><path d="M10.5 10L13.5 13" stroke="#C0A0A0" stroke-width="1"/></svg></div>
<div class="a" style="left:593px;top:86px;width:23px;height:22px;border-left:1px solid #F7F6F0;border-top:1px solid #F7F6F0;border-right:1px solid #000;border-bottom:1px solid #000;background:#ECE9D8"><svg class="a" style="left:-1px;top:-1px" width="23" height="22" viewBox="0 0 23 22"><path d="M5.5 17Q7 9 16 5" stroke="#000" stroke-width="1.6" fill="none"/><path d="M7 5L14 13" stroke="#D0A0A0" stroke-width="1"/></svg></div>
<div class="a" style="left:616px;top:86px;width:23px;height:22px;border-left:1px solid #F7F6F0;border-top:1px solid #F7F6F0;border-right:1px solid #000;border-bottom:1px solid #000;background:#ECE9D8"><svg class="a" style="left:-1px;top:-1px" width="23" height="22" viewBox="0 0 23 22"><circle cx="8.5" cy="10" r="3.3" fill="none" stroke="#000" stroke-width="1" stroke-dasharray="1.5 1"/><circle cx="8.5" cy="10" r="1" fill="#808080"/><path d="M11 12L15 15" stroke="#808080" stroke-width="1" stroke-dasharray="1 1"/><path d="M17 14v3h-3z" fill="#000"/></svg></div>
<div class="a" style="left:639px;top:86px;width:23px;height:22px;border-left:1px solid #F7F6F0;border-top:1px solid #F7F6F0;border-right:1px solid #000;border-bottom:1px solid #000;background:#ECE9D8"><svg class="a" style="left:-1px;top:-1px" width="23" height="22" viewBox="0 0 23 22"><path d="M6 5V13Q6 17 10 17H17" stroke="#000" stroke-width="1.6" fill="none"/><path d="M16 7L9 13M9 13v-3M9 13h3" stroke="#F0A0B0" stroke-width="1" fill="none"/></svg></div>
<div class="a" style="left:4px;top:112px;width:1px;height:381px;background:#fff"></div>
<div class="a" style="left:5px;top:113px;width:455px;height:380px;background:#000;border-left:1px solid #8A887C;border-top:1px solid #56554E"></div>
<svg class="a" style="left:0;top:0" width="677" height="577"><path fill="#fff" d="M11 118h1v1h-1zM18 118h1v1h-1zM25 118h1v1h-1zM33 118h1v1h-1zM40 118h1v1h-1zM47 118h1v1h-1zM54 118h1v1h-1zM62 118h1v1h-1zM69 118h1v1h-1zM76 118h1v1h-1zM84 118h1v1h-1zM91 118h1v1h-1zM98 118h1v1h-1zM105 118h1v1h-1zM113 118h1v1h-1zM120 118h1v1h-1zM127 118h1v1h-1zM135 118h1v1h-1zM142 118h1v1h-1zM149 118h1v1h-1zM156 118h1v1h-1zM164 118h1v1h-1zM171 118h1v1h-1zM178 118h1v1h-1zM186 118h1v1h-1zM193 118h1v1h-1zM200 118h1v1h-1zM207 118h1v1h-1zM215 118h1v1h-1zM222 118h1v1h-1zM229 118h1v1h-1zM236 118h1v1h-1zM244 118h1v1h-1zM251 118h1v1h-1zM258 118h1v1h-1zM266 118h1v1h-1zM273 118h1v1h-1zM280 118h1v1h-1zM287 118h1v1h-1zM295 118h1v1h-1zM302 118h1v1h-1zM309 118h1v1h-1zM317 118h1v1h-1zM324 118h1v1h-1zM331 118h1v1h-1zM338 118h1v1h-1zM346 118h1v1h-1zM353 118h1v1h-1zM360 118h1v1h-1zM368 118h1v1h-1zM375 118h1v1h-1zM382 118h1v1h-1zM389 118h1v1h-1zM397 118h1v1h-1zM404 118h1v1h-1zM411 118h1v1h-1zM418 118h1v1h-1zM426 118h1v1h-1zM433 118h1v1h-1zM440 118h1v1h-1zM448 118h1v1h-1zM455 118h1v1h-1zM11 125h1v1h-1zM18 125h1v1h-1zM25 125h1v1h-1zM33 125h1v1h-1zM40 125h1v1h-1zM47 125h1v1h-1zM54 125h1v1h-1zM62 125h1v1h-1zM69 125h1v1h-1zM76 125h1v1h-1zM84 125h1v1h-1zM91 125h1v1h-1zM98 125h1v1h-1zM105 125h1v1h-1zM113 125h1v1h-1zM120 125h1v1h-1zM127 125h1v1h-1zM135 125h1v1h-1zM142 125h1v1h-1zM149 125h1v1h-1zM156 125h1v1h-1zM164 125h1v1h-1zM171 125h1v1h-1zM178 125h1v1h-1zM186 125h1v1h-1zM193 125h1v1h-1zM200 125h1v1h-1zM207 125h1v1h-1zM215 125h1v1h-1zM222 125h1v1h-1zM229 125h1v1h-1zM236 125h1v1h-1zM244 125h1v1h-1zM251 125h1v1h-1zM258 125h1v1h-1zM266 125h1v1h-1zM273 125h1v1h-1zM280 125h1v1h-1zM287 125h1v1h-1zM295 125h1v1h-1zM302 125h1v1h-1zM309 125h1v1h-1zM317 125h1v1h-1zM324 125h1v1h-1zM331 125h1v1h-1zM338 125h1v1h-1zM346 125h1v1h-1zM353 125h1v1h-1zM360 125h1v1h-1zM368 125h1v1h-1zM375 125h1v1h-1zM382 125h1v1h-1zM389 125h1v1h-1zM397 125h1v1h-1zM404 125h1v1h-1zM411 125h1v1h-1zM418 125h1v1h-1zM426 125h1v1h-1zM433 125h1v1h-1zM440 125h1v1h-1zM448 125h1v1h-1zM455 125h1v1h-1zM11 132h1v1h-1zM18 132h1v1h-1zM25 132h1v1h-1zM33 132h1v1h-1zM40 132h1v1h-1zM47 132h1v1h-1zM54 132h1v1h-1zM62 132h1v1h-1zM69 132h1v1h-1zM76 132h1v1h-1zM84 132h1v1h-1zM91 132h1v1h-1zM98 132h1v1h-1zM105 132h1v1h-1zM113 132h1v1h-1zM120 132h1v1h-1zM127 132h1v1h-1zM135 132h1v1h-1zM142 132h1v1h-1zM149 132h1v1h-1zM156 132h1v1h-1zM164 132h1v1h-1zM171 132h1v1h-1zM178 132h1v1h-1zM186 132h1v1h-1zM193 132h1v1h-1zM200 132h1v1h-1zM207 132h1v1h-1zM215 132h1v1h-1zM222 132h1v1h-1zM229 132h1v1h-1zM236 132h1v1h-1zM244 132h1v1h-1zM251 132h1v1h-1zM258 132h1v1h-1zM266 132h1v1h-1zM273 132h1v1h-1zM280 132h1v1h-1zM287 132h1v1h-1zM295 132h1v1h-1zM302 132h1v1h-1zM309 132h1v1h-1zM317 132h1v1h-1zM324 132h1v1h-1zM331 132h1v1h-1zM338 132h1v1h-1zM346 132h1v1h-1zM353 132h1v1h-1zM360 132h1v1h-1zM368 132h1v1h-1zM375 132h1v1h-1zM382 132h1v1h-1zM389 132h1v1h-1zM397 132h1v1h-1zM404 132h1v1h-1zM411 132h1v1h-1zM418 132h1v1h-1zM426 132h1v1h-1zM433 132h1v1h-1zM440 132h1v1h-1zM448 132h1v1h-1zM455 132h1v1h-1zM11 140h1v1h-1zM18 140h1v1h-1zM25 140h1v1h-1zM33 140h1v1h-1zM40 140h1v1h-1zM47 140h1v1h-1zM54 140h1v1h-1zM62 140h1v1h-1zM69 140h1v1h-1zM76 140h1v1h-1zM84 140h1v1h-1zM91 140h1v1h-1zM98 140h1v1h-1zM105 140h1v1h-1zM113 140h1v1h-1zM120 140h1v1h-1zM127 140h1v1h-1zM135 140h1v1h-1zM142 140h1v1h-1zM149 140h1v1h-1zM156 140h1v1h-1zM164 140h1v1h-1zM171 140h1v1h-1zM178 140h1v1h-1zM186 140h1v1h-1zM193 140h1v1h-1zM200 140h1v1h-1zM207 140h1v1h-1zM215 140h1v1h-1zM222 140h1v1h-1zM229 140h1v1h-1zM236 140h1v1h-1zM244 140h1v1h-1zM251 140h1v1h-1zM258 140h1v1h-1zM266 140h1v1h-1zM273 140h1v1h-1zM280 140h1v1h-1zM287 140h1v1h-1zM295 140h1v1h-1zM302 140h1v1h-1zM309 140h1v1h-1zM317 140h1v1h-1zM324 140h1v1h-1zM331 140h1v1h-1zM338 140h1v1h-1zM346 140h1v1h-1zM353 140h1v1h-1zM360 140h1v1h-1zM368 140h1v1h-1zM375 140h1v1h-1zM382 140h1v1h-1zM389 140h1v1h-1zM397 140h1v1h-1zM404 140h1v1h-1zM411 140h1v1h-1zM418 140h1v1h-1zM426 140h1v1h-1zM433 140h1v1h-1zM440 140h1v1h-1zM448 140h1v1h-1zM455 140h1v1h-1zM11 147h1v1h-1zM18 147h1v1h-1zM25 147h1v1h-1zM33 147h1v1h-1zM40 147h1v1h-1zM47 147h1v1h-1zM54 147h1v1h-1zM62 147h1v1h-1zM69 147h1v1h-1zM76 147h1v1h-1zM84 147h1v1h-1zM91 147h1v1h-1zM98 147h1v1h-1zM105 147h1v1h-1zM113 147h1v1h-1zM120 147h1v1h-1zM127 147h1v1h-1zM135 147h1v1h-1zM142 147h1v1h-1zM149 147h1v1h-1zM156 147h1v1h-1zM164 147h1v1h-1zM171 147h1v1h-1zM178 147h1v1h-1zM186 147h1v1h-1zM193 147h1v1h-1zM200 147h1v1h-1zM207 147h1v1h-1zM215 147h1v1h-1zM222 147h1v1h-1zM229 147h1v1h-1zM236 147h1v1h-1zM244 147h1v1h-1zM251 147h1v1h-1zM258 147h1v1h-1zM266 147h1v1h-1zM273 147h1v1h-1zM280 147h1v1h-1zM287 147h1v1h-1zM295 147h1v1h-1zM302 147h1v1h-1zM309 147h1v1h-1zM317 147h1v1h-1zM324 147h1v1h-1zM331 147h1v1h-1zM338 147h1v1h-1zM346 147h1v1h-1zM353 147h1v1h-1zM360 147h1v1h-1zM368 147h1v1h-1zM375 147h1v1h-1zM382 147h1v1h-1zM389 147h1v1h-1zM397 147h1v1h-1zM404 147h1v1h-1zM411 147h1v1h-1zM418 147h1v1h-1zM426 147h1v1h-1zM433 147h1v1h-1zM440 147h1v1h-1zM448 147h1v1h-1zM455 147h1v1h-1zM11 154h1v1h-1zM18 154h1v1h-1zM25 154h1v1h-1zM33 154h1v1h-1zM40 154h1v1h-1zM47 154h1v1h-1zM54 154h1v1h-1zM62 154h1v1h-1zM69 154h1v1h-1zM76 154h1v1h-1zM84 154h1v1h-1zM91 154h1v1h-1zM98 154h1v1h-1zM105 154h1v1h-1zM113 154h1v1h-1zM120 154h1v1h-1zM127 154h1v1h-1zM135 154h1v1h-1zM142 154h1v1h-1zM149 154h1v1h-1zM156 154h1v1h-1zM164 154h1v1h-1zM171 154h1v1h-1zM178 154h1v1h-1zM186 154h1v1h-1zM193 154h1v1h-1zM200 154h1v1h-1zM207 154h1v1h-1zM215 154h1v1h-1zM222 154h1v1h-1zM229 154h1v1h-1zM236 154h1v1h-1zM244 154h1v1h-1zM251 154h1v1h-1zM258 154h1v1h-1zM266 154h1v1h-1zM273 154h1v1h-1zM280 154h1v1h-1zM287 154h1v1h-1zM295 154h1v1h-1zM302 154h1v1h-1zM309 154h1v1h-1zM317 154h1v1h-1zM324 154h1v1h-1zM331 154h1v1h-1zM338 154h1v1h-1zM346 154h1v1h-1zM353 154h1v1h-1zM360 154h1v1h-1zM368 154h1v1h-1zM375 154h1v1h-1zM382 154h1v1h-1zM389 154h1v1h-1zM397 154h1v1h-1zM404 154h1v1h-1zM411 154h1v1h-1zM418 154h1v1h-1zM426 154h1v1h-1zM433 154h1v1h-1zM440 154h1v1h-1zM448 154h1v1h-1zM455 154h1v1h-1zM11 161h1v1h-1zM18 161h1v1h-1zM25 161h1v1h-1zM33 161h1v1h-1zM40 161h1v1h-1zM47 161h1v1h-1zM54 161h1v1h-1zM62 161h1v1h-1zM69 161h1v1h-1zM76 161h1v1h-1zM84 161h1v1h-1zM91 161h1v1h-1zM98 161h1v1h-1zM105 161h1v1h-1zM113 161h1v1h-1zM120 161h1v1h-1zM127 161h1v1h-1zM135 161h1v1h-1zM142 161h1v1h-1zM149 161h1v1h-1zM156 161h1v1h-1zM164 161h1v1h-1zM171 161h1v1h-1zM178 161h1v1h-1zM186 161h1v1h-1zM193 161h1v1h-1zM200 161h1v1h-1zM207 161h1v1h-1zM215 161h1v1h-1zM222 161h1v1h-1zM229 161h1v1h-1zM236 161h1v1h-1zM244 161h1v1h-1zM251 161h1v1h-1zM258 161h1v1h-1zM266 161h1v1h-1zM273 161h1v1h-1zM280 161h1v1h-1zM287 161h1v1h-1zM295 161h1v1h-1zM302 161h1v1h-1zM309 161h1v1h-1zM317 161h1v1h-1zM324 161h1v1h-1zM331 161h1v1h-1zM338 161h1v1h-1zM346 161h1v1h-1zM353 161h1v1h-1zM360 161h1v1h-1zM368 161h1v1h-1zM375 161h1v1h-1zM382 161h1v1h-1zM389 161h1v1h-1zM397 161h1v1h-1zM404 161h1v1h-1zM411 161h1v1h-1zM418 161h1v1h-1zM426 161h1v1h-1zM433 161h1v1h-1zM440 161h1v1h-1zM448 161h1v1h-1zM455 161h1v1h-1zM11 169h1v1h-1zM18 169h1v1h-1zM25 169h1v1h-1zM33 169h1v1h-1zM40 169h1v1h-1zM47 169h1v1h-1zM54 169h1v1h-1zM62 169h1v1h-1zM69 169h1v1h-1zM76 169h1v1h-1zM84 169h1v1h-1zM91 169h1v1h-1zM98 169h1v1h-1zM105 169h1v1h-1zM113 169h1v1h-1zM120 169h1v1h-1zM127 169h1v1h-1zM135 169h1v1h-1zM142 169h1v1h-1zM149 169h1v1h-1zM156 169h1v1h-1zM164 169h1v1h-1zM171 169h1v1h-1zM178 169h1v1h-1zM186 169h1v1h-1zM193 169h1v1h-1zM200 169h1v1h-1zM207 169h1v1h-1zM215 169h1v1h-1zM222 169h1v1h-1zM229 169h1v1h-1zM236 169h1v1h-1zM244 169h1v1h-1zM251 169h1v1h-1zM258 169h1v1h-1zM266 169h1v1h-1zM273 169h1v1h-1zM280 169h1v1h-1zM287 169h1v1h-1zM295 169h1v1h-1zM302 169h1v1h-1zM309 169h1v1h-1zM317 169h1v1h-1zM324 169h1v1h-1zM331 169h1v1h-1zM338 169h1v1h-1zM346 169h1v1h-1zM353 169h1v1h-1zM360 169h1v1h-1zM368 169h1v1h-1zM375 169h1v1h-1zM382 169h1v1h-1zM389 169h1v1h-1zM397 169h1v1h-1zM404 169h1v1h-1zM411 169h1v1h-1zM418 169h1v1h-1zM426 169h1v1h-1zM433 169h1v1h-1zM440 169h1v1h-1zM448 169h1v1h-1zM455 169h1v1h-1zM11 176h1v1h-1zM18 176h1v1h-1zM25 176h1v1h-1zM33 176h1v1h-1zM40 176h1v1h-1zM47 176h1v1h-1zM54 176h1v1h-1zM62 176h1v1h-1zM69 176h1v1h-1zM76 176h1v1h-1zM84 176h1v1h-1zM91 176h1v1h-1zM98 176h1v1h-1zM105 176h1v1h-1zM113 176h1v1h-1zM120 176h1v1h-1zM127 176h1v1h-1zM135 176h1v1h-1zM142 176h1v1h-1zM149 176h1v1h-1zM156 176h1v1h-1zM164 176h1v1h-1zM171 176h1v1h-1zM178 176h1v1h-1zM186 176h1v1h-1zM193 176h1v1h-1zM200 176h1v1h-1zM207 176h1v1h-1zM215 176h1v1h-1zM222 176h1v1h-1zM229 176h1v1h-1zM236 176h1v1h-1zM244 176h1v1h-1zM251 176h1v1h-1zM258 176h1v1h-1zM266 176h1v1h-1zM273 176h1v1h-1zM280 176h1v1h-1zM287 176h1v1h-1zM295 176h1v1h-1zM302 176h1v1h-1zM309 176h1v1h-1zM317 176h1v1h-1zM324 176h1v1h-1zM331 176h1v1h-1zM338 176h1v1h-1zM346 176h1v1h-1zM353 176h1v1h-1zM360 176h1v1h-1zM368 176h1v1h-1zM375 176h1v1h-1zM382 176h1v1h-1zM389 176h1v1h-1zM397 176h1v1h-1zM404 176h1v1h-1zM411 176h1v1h-1zM418 176h1v1h-1zM426 176h1v1h-1zM433 176h1v1h-1zM440 176h1v1h-1zM448 176h1v1h-1zM455 176h1v1h-1zM11 183h1v1h-1zM18 183h1v1h-1zM25 183h1v1h-1zM33 183h1v1h-1zM40 183h1v1h-1zM47 183h1v1h-1zM54 183h1v1h-1zM62 183h1v1h-1zM69 183h1v1h-1zM76 183h1v1h-1zM84 183h1v1h-1zM91 183h1v1h-1zM98 183h1v1h-1zM105 183h1v1h-1zM113 183h1v1h-1zM120 183h1v1h-1zM127 183h1v1h-1zM135 183h1v1h-1zM142 183h1v1h-1zM149 183h1v1h-1zM156 183h1v1h-1zM164 183h1v1h-1zM171 183h1v1h-1zM178 183h1v1h-1zM186 183h1v1h-1zM193 183h1v1h-1zM200 183h1v1h-1zM207 183h1v1h-1zM215 183h1v1h-1zM222 183h1v1h-1zM229 183h1v1h-1zM236 183h1v1h-1zM244 183h1v1h-1zM251 183h1v1h-1zM258 183h1v1h-1zM266 183h1v1h-1zM273 183h1v1h-1zM280 183h1v1h-1zM287 183h1v1h-1zM295 183h1v1h-1zM302 183h1v1h-1zM309 183h1v1h-1zM317 183h1v1h-1zM324 183h1v1h-1zM331 183h1v1h-1zM338 183h1v1h-1zM346 183h1v1h-1zM353 183h1v1h-1zM360 183h1v1h-1zM368 183h1v1h-1zM375 183h1v1h-1zM382 183h1v1h-1zM389 183h1v1h-1zM397 183h1v1h-1zM404 183h1v1h-1zM411 183h1v1h-1zM418 183h1v1h-1zM426 183h1v1h-1zM433 183h1v1h-1zM440 183h1v1h-1zM448 183h1v1h-1zM455 183h1v1h-1zM11 191h1v1h-1zM18 191h1v1h-1zM25 191h1v1h-1zM33 191h1v1h-1zM40 191h1v1h-1zM47 191h1v1h-1zM54 191h1v1h-1zM62 191h1v1h-1zM69 191h1v1h-1zM76 191h1v1h-1zM84 191h1v1h-1zM91 191h1v1h-1zM98 191h1v1h-1zM105 191h1v1h-1zM113 191h1v1h-1zM120 191h1v1h-1zM127 191h1v1h-1zM135 191h1v1h-1zM142 191h1v1h-1zM149 191h1v1h-1zM156 191h1v1h-1zM164 191h1v1h-1zM171 191h1v1h-1zM178 191h1v1h-1zM186 191h1v1h-1zM193 191h1v1h-1zM200 191h1v1h-1zM207 191h1v1h-1zM215 191h1v1h-1zM222 191h1v1h-1zM229 191h1v1h-1zM236 191h1v1h-1zM244 191h1v1h-1zM251 191h1v1h-1zM258 191h1v1h-1zM266 191h1v1h-1zM273 191h1v1h-1zM280 191h1v1h-1zM287 191h1v1h-1zM295 191h1v1h-1zM302 191h1v1h-1zM309 191h1v1h-1zM317 191h1v1h-1zM324 191h1v1h-1zM331 191h1v1h-1zM338 191h1v1h-1zM346 191h1v1h-1zM353 191h1v1h-1zM360 191h1v1h-1zM368 191h1v1h-1zM375 191h1v1h-1zM382 191h1v1h-1zM389 191h1v1h-1zM397 191h1v1h-1zM404 191h1v1h-1zM411 191h1v1h-1zM418 191h1v1h-1zM426 191h1v1h-1zM433 191h1v1h-1zM440 191h1v1h-1zM448 191h1v1h-1zM455 191h1v1h-1zM11 198h1v1h-1zM18 198h1v1h-1zM25 198h1v1h-1zM33 198h1v1h-1zM40 198h1v1h-1zM47 198h1v1h-1zM54 198h1v1h-1zM62 198h1v1h-1zM69 198h1v1h-1zM76 198h1v1h-1zM84 198h1v1h-1zM91 198h1v1h-1zM98 198h1v1h-1zM105 198h1v1h-1zM113 198h1v1h-1zM120 198h1v1h-1zM127 198h1v1h-1zM135 198h1v1h-1zM142 198h1v1h-1zM149 198h1v1h-1zM156 198h1v1h-1zM164 198h1v1h-1zM171 198h1v1h-1zM178 198h1v1h-1zM186 198h1v1h-1zM193 198h1v1h-1zM200 198h1v1h-1zM207 198h1v1h-1zM215 198h1v1h-1zM222 198h1v1h-1zM229 198h1v1h-1zM236 198h1v1h-1zM244 198h1v1h-1zM251 198h1v1h-1zM258 198h1v1h-1zM266 198h1v1h-1zM273 198h1v1h-1zM280 198h1v1h-1zM287 198h1v1h-1zM295 198h1v1h-1zM302 198h1v1h-1zM309 198h1v1h-1zM317 198h1v1h-1zM324 198h1v1h-1zM331 198h1v1h-1zM338 198h1v1h-1zM346 198h1v1h-1zM353 198h1v1h-1zM360 198h1v1h-1zM368 198h1v1h-1zM375 198h1v1h-1zM382 198h1v1h-1zM389 198h1v1h-1zM397 198h1v1h-1zM404 198h1v1h-1zM411 198h1v1h-1zM418 198h1v1h-1zM426 198h1v1h-1zM433 198h1v1h-1zM440 198h1v1h-1zM448 198h1v1h-1zM455 198h1v1h-1zM11 205h1v1h-1zM18 205h1v1h-1zM25 205h1v1h-1zM33 205h1v1h-1zM40 205h1v1h-1zM47 205h1v1h-1zM54 205h1v1h-1zM62 205h1v1h-1zM69 205h1v1h-1zM76 205h1v1h-1zM84 205h1v1h-1zM91 205h1v1h-1zM98 205h1v1h-1zM105 205h1v1h-1zM113 205h1v1h-1zM120 205h1v1h-1zM127 205h1v1h-1zM135 205h1v1h-1zM142 205h1v1h-1zM149 205h1v1h-1zM156 205h1v1h-1zM164 205h1v1h-1zM171 205h1v1h-1zM178 205h1v1h-1zM186 205h1v1h-1zM193 205h1v1h-1zM200 205h1v1h-1zM207 205h1v1h-1zM215 205h1v1h-1zM222 205h1v1h-1zM229 205h1v1h-1zM236 205h1v1h-1zM244 205h1v1h-1zM251 205h1v1h-1zM258 205h1v1h-1zM266 205h1v1h-1zM273 205h1v1h-1zM280 205h1v1h-1zM287 205h1v1h-1zM295 205h1v1h-1zM302 205h1v1h-1zM309 205h1v1h-1zM317 205h1v1h-1zM324 205h1v1h-1zM331 205h1v1h-1zM338 205h1v1h-1zM346 205h1v1h-1zM353 205h1v1h-1zM360 205h1v1h-1zM368 205h1v1h-1zM375 205h1v1h-1zM382 205h1v1h-1zM389 205h1v1h-1zM397 205h1v1h-1zM404 205h1v1h-1zM411 205h1v1h-1zM418 205h1v1h-1zM426 205h1v1h-1zM433 205h1v1h-1zM440 205h1v1h-1zM448 205h1v1h-1zM455 205h1v1h-1zM11 212h1v1h-1zM18 212h1v1h-1zM25 212h1v1h-1zM33 212h1v1h-1zM40 212h1v1h-1zM47 212h1v1h-1zM54 212h1v1h-1zM62 212h1v1h-1zM69 212h1v1h-1zM76 212h1v1h-1zM84 212h1v1h-1zM91 212h1v1h-1zM98 212h1v1h-1zM105 212h1v1h-1zM113 212h1v1h-1zM120 212h1v1h-1zM127 212h1v1h-1zM135 212h1v1h-1zM142 212h1v1h-1zM149 212h1v1h-1zM156 212h1v1h-1zM164 212h1v1h-1zM171 212h1v1h-1zM178 212h1v1h-1zM186 212h1v1h-1zM193 212h1v1h-1zM200 212h1v1h-1zM207 212h1v1h-1zM215 212h1v1h-1zM222 212h1v1h-1zM229 212h1v1h-1zM236 212h1v1h-1zM244 212h1v1h-1zM251 212h1v1h-1zM258 212h1v1h-1zM266 212h1v1h-1zM273 212h1v1h-1zM280 212h1v1h-1zM287 212h1v1h-1zM295 212h1v1h-1zM302 212h1v1h-1zM309 212h1v1h-1zM317 212h1v1h-1zM324 212h1v1h-1zM331 212h1v1h-1zM338 212h1v1h-1zM346 212h1v1h-1zM353 212h1v1h-1zM360 212h1v1h-1zM368 212h1v1h-1zM375 212h1v1h-1zM382 212h1v1h-1zM389 212h1v1h-1zM397 212h1v1h-1zM404 212h1v1h-1zM411 212h1v1h-1zM418 212h1v1h-1zM426 212h1v1h-1zM433 212h1v1h-1zM440 212h1v1h-1zM448 212h1v1h-1zM455 212h1v1h-1zM11 220h1v1h-1zM18 220h1v1h-1zM25 220h1v1h-1zM33 220h1v1h-1zM40 220h1v1h-1zM47 220h1v1h-1zM54 220h1v1h-1zM62 220h1v1h-1zM69 220h1v1h-1zM76 220h1v1h-1zM84 220h1v1h-1zM91 220h1v1h-1zM98 220h1v1h-1zM105 220h1v1h-1zM113 220h1v1h-1zM120 220h1v1h-1zM127 220h1v1h-1zM135 220h1v1h-1zM142 220h1v1h-1zM149 220h1v1h-1zM156 220h1v1h-1zM164 220h1v1h-1zM171 220h1v1h-1zM178 220h1v1h-1zM186 220h1v1h-1zM193 220h1v1h-1zM200 220h1v1h-1zM207 220h1v1h-1zM215 220h1v1h-1zM222 220h1v1h-1zM229 220h1v1h-1zM236 220h1v1h-1zM244 220h1v1h-1zM251 220h1v1h-1zM258 220h1v1h-1zM266 220h1v1h-1zM273 220h1v1h-1zM280 220h1v1h-1zM287 220h1v1h-1zM295 220h1v1h-1zM302 220h1v1h-1zM309 220h1v1h-1zM317 220h1v1h-1zM324 220h1v1h-1zM331 220h1v1h-1zM338 220h1v1h-1zM346 220h1v1h-1zM353 220h1v1h-1zM360 220h1v1h-1zM368 220h1v1h-1zM375 220h1v1h-1zM382 220h1v1h-1zM389 220h1v1h-1zM397 220h1v1h-1zM404 220h1v1h-1zM411 220h1v1h-1zM418 220h1v1h-1zM426 220h1v1h-1zM433 220h1v1h-1zM440 220h1v1h-1zM448 220h1v1h-1zM455 220h1v1h-1zM11 227h1v1h-1zM18 227h1v1h-1zM25 227h1v1h-1zM33 227h1v1h-1zM40 227h1v1h-1zM47 227h1v1h-1zM54 227h1v1h-1zM62 227h1v1h-1zM69 227h1v1h-1zM76 227h1v1h-1zM84 227h1v1h-1zM91 227h1v1h-1zM98 227h1v1h-1zM105 227h1v1h-1zM113 227h1v1h-1zM120 227h1v1h-1zM127 227h1v1h-1zM135 227h1v1h-1zM142 227h1v1h-1zM149 227h1v1h-1zM156 227h1v1h-1zM164 227h1v1h-1zM171 227h1v1h-1zM178 227h1v1h-1zM186 227h1v1h-1zM193 227h1v1h-1zM200 227h1v1h-1zM207 227h1v1h-1zM215 227h1v1h-1zM222 227h1v1h-1zM229 227h1v1h-1zM236 227h1v1h-1zM244 227h1v1h-1zM251 227h1v1h-1zM258 227h1v1h-1zM266 227h1v1h-1zM273 227h1v1h-1zM280 227h1v1h-1zM287 227h1v1h-1zM295 227h1v1h-1zM302 227h1v1h-1zM309 227h1v1h-1zM317 227h1v1h-1zM324 227h1v1h-1zM331 227h1v1h-1zM338 227h1v1h-1zM346 227h1v1h-1zM353 227h1v1h-1zM360 227h1v1h-1zM368 227h1v1h-1zM375 227h1v1h-1zM382 227h1v1h-1zM389 227h1v1h-1zM397 227h1v1h-1zM404 227h1v1h-1zM411 227h1v1h-1zM418 227h1v1h-1zM426 227h1v1h-1zM433 227h1v1h-1zM440 227h1v1h-1zM448 227h1v1h-1zM455 227h1v1h-1zM11 234h1v1h-1zM18 234h1v1h-1zM25 234h1v1h-1zM33 234h1v1h-1zM40 234h1v1h-1zM47 234h1v1h-1zM54 234h1v1h-1zM62 234h1v1h-1zM69 234h1v1h-1zM76 234h1v1h-1zM84 234h1v1h-1zM91 234h1v1h-1zM98 234h1v1h-1zM105 234h1v1h-1zM113 234h1v1h-1zM120 234h1v1h-1zM127 234h1v1h-1zM135 234h1v1h-1zM142 234h1v1h-1zM149 234h1v1h-1zM156 234h1v1h-1zM164 234h1v1h-1zM171 234h1v1h-1zM178 234h1v1h-1zM186 234h1v1h-1zM193 234h1v1h-1zM200 234h1v1h-1zM207 234h1v1h-1zM215 234h1v1h-1zM222 234h1v1h-1zM229 234h1v1h-1zM236 234h1v1h-1zM244 234h1v1h-1zM251 234h1v1h-1zM258 234h1v1h-1zM266 234h1v1h-1zM273 234h1v1h-1zM280 234h1v1h-1zM287 234h1v1h-1zM295 234h1v1h-1zM302 234h1v1h-1zM309 234h1v1h-1zM317 234h1v1h-1zM324 234h1v1h-1zM331 234h1v1h-1zM338 234h1v1h-1zM346 234h1v1h-1zM353 234h1v1h-1zM360 234h1v1h-1zM368 234h1v1h-1zM375 234h1v1h-1zM382 234h1v1h-1zM389 234h1v1h-1zM397 234h1v1h-1zM404 234h1v1h-1zM411 234h1v1h-1zM418 234h1v1h-1zM426 234h1v1h-1zM433 234h1v1h-1zM440 234h1v1h-1zM448 234h1v1h-1zM455 234h1v1h-1zM11 242h1v1h-1zM18 242h1v1h-1zM25 242h1v1h-1zM33 242h1v1h-1zM40 242h1v1h-1zM47 242h1v1h-1zM54 242h1v1h-1zM62 242h1v1h-1zM69 242h1v1h-1zM76 242h1v1h-1zM84 242h1v1h-1zM91 242h1v1h-1zM98 242h1v1h-1zM105 242h1v1h-1zM113 242h1v1h-1zM120 242h1v1h-1zM127 242h1v1h-1zM135 242h1v1h-1zM142 242h1v1h-1zM149 242h1v1h-1zM156 242h1v1h-1zM164 242h1v1h-1zM171 242h1v1h-1zM178 242h1v1h-1zM186 242h1v1h-1zM193 242h1v1h-1zM200 242h1v1h-1zM207 242h1v1h-1zM215 242h1v1h-1zM222 242h1v1h-1zM229 242h1v1h-1zM236 242h1v1h-1zM244 242h1v1h-1zM251 242h1v1h-1zM258 242h1v1h-1zM266 242h1v1h-1zM273 242h1v1h-1zM280 242h1v1h-1zM287 242h1v1h-1zM295 242h1v1h-1zM302 242h1v1h-1zM309 242h1v1h-1zM317 242h1v1h-1zM324 242h1v1h-1zM331 242h1v1h-1zM338 242h1v1h-1zM346 242h1v1h-1zM353 242h1v1h-1zM360 242h1v1h-1zM368 242h1v1h-1zM375 242h1v1h-1zM382 242h1v1h-1zM389 242h1v1h-1zM397 242h1v1h-1zM404 242h1v1h-1zM411 242h1v1h-1zM418 242h1v1h-1zM426 242h1v1h-1zM433 242h1v1h-1zM440 242h1v1h-1zM448 242h1v1h-1zM455 242h1v1h-1zM11 249h1v1h-1zM18 249h1v1h-1zM25 249h1v1h-1zM33 249h1v1h-1zM40 249h1v1h-1zM47 249h1v1h-1zM54 249h1v1h-1zM62 249h1v1h-1zM69 249h1v1h-1zM76 249h1v1h-1zM84 249h1v1h-1zM91 249h1v1h-1zM98 249h1v1h-1zM105 249h1v1h-1zM113 249h1v1h-1zM120 249h1v1h-1zM127 249h1v1h-1zM135 249h1v1h-1zM142 249h1v1h-1zM149 249h1v1h-1zM156 249h1v1h-1zM164 249h1v1h-1zM171 249h1v1h-1zM178 249h1v1h-1zM186 249h1v1h-1zM193 249h1v1h-1zM200 249h1v1h-1zM207 249h1v1h-1zM215 249h1v1h-1zM222 249h1v1h-1zM229 249h1v1h-1zM236 249h1v1h-1zM244 249h1v1h-1zM251 249h1v1h-1zM258 249h1v1h-1zM266 249h1v1h-1zM273 249h1v1h-1zM280 249h1v1h-1zM287 249h1v1h-1zM295 249h1v1h-1zM302 249h1v1h-1zM309 249h1v1h-1zM317 249h1v1h-1zM324 249h1v1h-1zM331 249h1v1h-1zM338 249h1v1h-1zM346 249h1v1h-1zM353 249h1v1h-1zM360 249h1v1h-1zM368 249h1v1h-1zM375 249h1v1h-1zM382 249h1v1h-1zM389 249h1v1h-1zM397 249h1v1h-1zM404 249h1v1h-1zM411 249h1v1h-1zM418 249h1v1h-1zM426 249h1v1h-1zM433 249h1v1h-1zM440 249h1v1h-1zM448 249h1v1h-1zM455 249h1v1h-1zM11 256h1v1h-1zM18 256h1v1h-1zM25 256h1v1h-1zM33 256h1v1h-1zM40 256h1v1h-1zM47 256h1v1h-1zM54 256h1v1h-1zM62 256h1v1h-1zM69 256h1v1h-1zM76 256h1v1h-1zM84 256h1v1h-1zM91 256h1v1h-1zM98 256h1v1h-1zM105 256h1v1h-1zM113 256h1v1h-1zM120 256h1v1h-1zM127 256h1v1h-1zM135 256h1v1h-1zM142 256h1v1h-1zM149 256h1v1h-1zM156 256h1v1h-1zM164 256h1v1h-1zM171 256h1v1h-1zM178 256h1v1h-1zM186 256h1v1h-1zM193 256h1v1h-1zM200 256h1v1h-1zM207 256h1v1h-1zM215 256h1v1h-1zM222 256h1v1h-1zM229 256h1v1h-1zM236 256h1v1h-1zM244 256h1v1h-1zM251 256h1v1h-1zM258 256h1v1h-1zM266 256h1v1h-1zM273 256h1v1h-1zM280 256h1v1h-1zM287 256h1v1h-1zM295 256h1v1h-1zM302 256h1v1h-1zM309 256h1v1h-1zM317 256h1v1h-1zM324 256h1v1h-1zM331 256h1v1h-1zM338 256h1v1h-1zM346 256h1v1h-1zM353 256h1v1h-1zM360 256h1v1h-1zM368 256h1v1h-1zM375 256h1v1h-1zM382 256h1v1h-1zM389 256h1v1h-1zM397 256h1v1h-1zM404 256h1v1h-1zM411 256h1v1h-1zM418 256h1v1h-1zM426 256h1v1h-1zM433 256h1v1h-1zM440 256h1v1h-1zM448 256h1v1h-1zM455 256h1v1h-1zM11 263h1v1h-1zM18 263h1v1h-1zM25 263h1v1h-1zM33 263h1v1h-1zM40 263h1v1h-1zM47 263h1v1h-1zM54 263h1v1h-1zM62 263h1v1h-1zM69 263h1v1h-1zM76 263h1v1h-1zM84 263h1v1h-1zM91 263h1v1h-1zM98 263h1v1h-1zM105 263h1v1h-1zM113 263h1v1h-1zM120 263h1v1h-1zM127 263h1v1h-1zM135 263h1v1h-1zM142 263h1v1h-1zM149 263h1v1h-1zM156 263h1v1h-1zM164 263h1v1h-1zM171 263h1v1h-1zM178 263h1v1h-1zM186 263h1v1h-1zM193 263h1v1h-1zM200 263h1v1h-1zM207 263h1v1h-1zM215 263h1v1h-1zM222 263h1v1h-1zM229 263h1v1h-1zM236 263h1v1h-1zM244 263h1v1h-1zM251 263h1v1h-1zM258 263h1v1h-1zM266 263h1v1h-1zM273 263h1v1h-1zM280 263h1v1h-1zM287 263h1v1h-1zM295 263h1v1h-1zM302 263h1v1h-1zM309 263h1v1h-1zM317 263h1v1h-1zM324 263h1v1h-1zM331 263h1v1h-1zM338 263h1v1h-1zM346 263h1v1h-1zM353 263h1v1h-1zM360 263h1v1h-1zM368 263h1v1h-1zM375 263h1v1h-1zM382 263h1v1h-1zM389 263h1v1h-1zM397 263h1v1h-1zM404 263h1v1h-1zM411 263h1v1h-1zM418 263h1v1h-1zM426 263h1v1h-1zM433 263h1v1h-1zM440 263h1v1h-1zM448 263h1v1h-1zM455 263h1v1h-1zM11 271h1v1h-1zM18 271h1v1h-1zM25 271h1v1h-1zM33 271h1v1h-1zM40 271h1v1h-1zM47 271h1v1h-1zM54 271h1v1h-1zM62 271h1v1h-1zM69 271h1v1h-1zM76 271h1v1h-1zM84 271h1v1h-1zM91 271h1v1h-1zM98 271h1v1h-1zM105 271h1v1h-1zM113 271h1v1h-1zM120 271h1v1h-1zM127 271h1v1h-1zM135 271h1v1h-1zM142 271h1v1h-1zM149 271h1v1h-1zM156 271h1v1h-1zM164 271h1v1h-1zM171 271h1v1h-1zM178 271h1v1h-1zM186 271h1v1h-1zM193 271h1v1h-1zM200 271h1v1h-1zM207 271h1v1h-1zM215 271h1v1h-1zM222 271h1v1h-1zM229 271h1v1h-1zM236 271h1v1h-1zM244 271h1v1h-1zM251 271h1v1h-1zM258 271h1v1h-1zM266 271h1v1h-1zM273 271h1v1h-1zM280 271h1v1h-1zM287 271h1v1h-1zM295 271h1v1h-1zM302 271h1v1h-1zM309 271h1v1h-1zM317 271h1v1h-1zM324 271h1v1h-1zM331 271h1v1h-1zM338 271h1v1h-1zM346 271h1v1h-1zM353 271h1v1h-1zM360 271h1v1h-1zM368 271h1v1h-1zM375 271h1v1h-1zM382 271h1v1h-1zM389 271h1v1h-1zM397 271h1v1h-1zM404 271h1v1h-1zM411 271h1v1h-1zM418 271h1v1h-1zM426 271h1v1h-1zM433 271h1v1h-1zM440 271h1v1h-1zM448 271h1v1h-1zM455 271h1v1h-1zM11 278h1v1h-1zM18 278h1v1h-1zM25 278h1v1h-1zM33 278h1v1h-1zM40 278h1v1h-1zM47 278h1v1h-1zM54 278h1v1h-1zM62 278h1v1h-1zM69 278h1v1h-1zM76 278h1v1h-1zM84 278h1v1h-1zM91 278h1v1h-1zM98 278h1v1h-1zM105 278h1v1h-1zM113 278h1v1h-1zM120 278h1v1h-1zM127 278h1v1h-1zM135 278h1v1h-1zM142 278h1v1h-1zM149 278h1v1h-1zM156 278h1v1h-1zM164 278h1v1h-1zM171 278h1v1h-1zM178 278h1v1h-1zM186 278h1v1h-1zM193 278h1v1h-1zM200 278h1v1h-1zM207 278h1v1h-1zM215 278h1v1h-1zM222 278h1v1h-1zM229 278h1v1h-1zM236 278h1v1h-1zM244 278h1v1h-1zM251 278h1v1h-1zM258 278h1v1h-1zM266 278h1v1h-1zM273 278h1v1h-1zM280 278h1v1h-1zM287 278h1v1h-1zM295 278h1v1h-1zM302 278h1v1h-1zM309 278h1v1h-1zM317 278h1v1h-1zM324 278h1v1h-1zM331 278h1v1h-1zM338 278h1v1h-1zM346 278h1v1h-1zM353 278h1v1h-1zM360 278h1v1h-1zM368 278h1v1h-1zM375 278h1v1h-1zM382 278h1v1h-1zM389 278h1v1h-1zM397 278h1v1h-1zM404 278h1v1h-1zM411 278h1v1h-1zM418 278h1v1h-1zM426 278h1v1h-1zM433 278h1v1h-1zM440 278h1v1h-1zM448 278h1v1h-1zM455 278h1v1h-1zM11 285h1v1h-1zM18 285h1v1h-1zM25 285h1v1h-1zM33 285h1v1h-1zM40 285h1v1h-1zM47 285h1v1h-1zM54 285h1v1h-1zM62 285h1v1h-1zM69 285h1v1h-1zM76 285h1v1h-1zM84 285h1v1h-1zM91 285h1v1h-1zM98 285h1v1h-1zM105 285h1v1h-1zM113 285h1v1h-1zM120 285h1v1h-1zM127 285h1v1h-1zM135 285h1v1h-1zM142 285h1v1h-1zM149 285h1v1h-1zM156 285h1v1h-1zM164 285h1v1h-1zM171 285h1v1h-1zM178 285h1v1h-1zM186 285h1v1h-1zM193 285h1v1h-1zM200 285h1v1h-1zM207 285h1v1h-1zM215 285h1v1h-1zM222 285h1v1h-1zM229 285h1v1h-1zM236 285h1v1h-1zM244 285h1v1h-1zM251 285h1v1h-1zM258 285h1v1h-1zM266 285h1v1h-1zM273 285h1v1h-1zM280 285h1v1h-1zM287 285h1v1h-1zM295 285h1v1h-1zM302 285h1v1h-1zM309 285h1v1h-1zM317 285h1v1h-1zM324 285h1v1h-1zM331 285h1v1h-1zM338 285h1v1h-1zM346 285h1v1h-1zM353 285h1v1h-1zM360 285h1v1h-1zM368 285h1v1h-1zM375 285h1v1h-1zM382 285h1v1h-1zM389 285h1v1h-1zM397 285h1v1h-1zM404 285h1v1h-1zM411 285h1v1h-1zM418 285h1v1h-1zM426 285h1v1h-1zM433 285h1v1h-1zM440 285h1v1h-1zM448 285h1v1h-1zM455 285h1v1h-1zM11 293h1v1h-1zM18 293h1v1h-1zM25 293h1v1h-1zM33 293h1v1h-1zM40 293h1v1h-1zM47 293h1v1h-1zM54 293h1v1h-1zM62 293h1v1h-1zM69 293h1v1h-1zM76 293h1v1h-1zM84 293h1v1h-1zM91 293h1v1h-1zM98 293h1v1h-1zM105 293h1v1h-1zM113 293h1v1h-1zM120 293h1v1h-1zM127 293h1v1h-1zM135 293h1v1h-1zM142 293h1v1h-1zM149 293h1v1h-1zM156 293h1v1h-1zM164 293h1v1h-1zM171 293h1v1h-1zM178 293h1v1h-1zM186 293h1v1h-1zM193 293h1v1h-1zM200 293h1v1h-1zM207 293h1v1h-1zM215 293h1v1h-1zM222 293h1v1h-1zM229 293h1v1h-1zM236 293h1v1h-1zM244 293h1v1h-1zM251 293h1v1h-1zM258 293h1v1h-1zM266 293h1v1h-1zM273 293h1v1h-1zM280 293h1v1h-1zM287 293h1v1h-1zM295 293h1v1h-1zM302 293h1v1h-1zM309 293h1v1h-1zM317 293h1v1h-1zM324 293h1v1h-1zM331 293h1v1h-1zM338 293h1v1h-1zM346 293h1v1h-1zM353 293h1v1h-1zM360 293h1v1h-1zM368 293h1v1h-1zM375 293h1v1h-1zM382 293h1v1h-1zM389 293h1v1h-1zM397 293h1v1h-1zM404 293h1v1h-1zM411 293h1v1h-1zM418 293h1v1h-1zM426 293h1v1h-1zM433 293h1v1h-1zM440 293h1v1h-1zM448 293h1v1h-1zM455 293h1v1h-1zM11 300h1v1h-1zM18 300h1v1h-1zM25 300h1v1h-1zM33 300h1v1h-1zM40 300h1v1h-1zM47 300h1v1h-1zM54 300h1v1h-1zM62 300h1v1h-1zM69 300h1v1h-1zM76 300h1v1h-1zM84 300h1v1h-1zM91 300h1v1h-1zM98 300h1v1h-1zM105 300h1v1h-1zM113 300h1v1h-1zM120 300h1v1h-1zM127 300h1v1h-1zM135 300h1v1h-1zM142 300h1v1h-1zM149 300h1v1h-1zM156 300h1v1h-1zM164 300h1v1h-1zM171 300h1v1h-1zM178 300h1v1h-1zM186 300h1v1h-1zM193 300h1v1h-1zM200 300h1v1h-1zM207 300h1v1h-1zM215 300h1v1h-1zM222 300h1v1h-1zM229 300h1v1h-1zM236 300h1v1h-1zM244 300h1v1h-1zM251 300h1v1h-1zM258 300h1v1h-1zM266 300h1v1h-1zM273 300h1v1h-1zM280 300h1v1h-1zM287 300h1v1h-1zM295 300h1v1h-1zM302 300h1v1h-1zM309 300h1v1h-1zM317 300h1v1h-1zM324 300h1v1h-1zM331 300h1v1h-1zM338 300h1v1h-1zM346 300h1v1h-1zM353 300h1v1h-1zM360 300h1v1h-1zM368 300h1v1h-1zM375 300h1v1h-1zM382 300h1v1h-1zM389 300h1v1h-1zM397 300h1v1h-1zM404 300h1v1h-1zM411 300h1v1h-1zM418 300h1v1h-1zM426 300h1v1h-1zM433 300h1v1h-1zM440 300h1v1h-1zM448 300h1v1h-1zM455 300h1v1h-1zM11 307h1v1h-1zM18 307h1v1h-1zM25 307h1v1h-1zM33 307h1v1h-1zM40 307h1v1h-1zM47 307h1v1h-1zM54 307h1v1h-1zM62 307h1v1h-1zM69 307h1v1h-1zM76 307h1v1h-1zM84 307h1v1h-1zM91 307h1v1h-1zM98 307h1v1h-1zM105 307h1v1h-1zM113 307h1v1h-1zM120 307h1v1h-1zM127 307h1v1h-1zM135 307h1v1h-1zM142 307h1v1h-1zM149 307h1v1h-1zM156 307h1v1h-1zM164 307h1v1h-1zM171 307h1v1h-1zM178 307h1v1h-1zM186 307h1v1h-1zM193 307h1v1h-1zM200 307h1v1h-1zM207 307h1v1h-1zM215 307h1v1h-1zM222 307h1v1h-1zM229 307h1v1h-1zM236 307h1v1h-1zM244 307h1v1h-1zM251 307h1v1h-1zM258 307h1v1h-1zM266 307h1v1h-1zM273 307h1v1h-1zM280 307h1v1h-1zM287 307h1v1h-1zM295 307h1v1h-1zM302 307h1v1h-1zM309 307h1v1h-1zM317 307h1v1h-1zM324 307h1v1h-1zM331 307h1v1h-1zM338 307h1v1h-1zM346 307h1v1h-1zM353 307h1v1h-1zM360 307h1v1h-1zM368 307h1v1h-1zM375 307h1v1h-1zM382 307h1v1h-1zM389 307h1v1h-1zM397 307h1v1h-1zM404 307h1v1h-1zM411 307h1v1h-1zM418 307h1v1h-1zM426 307h1v1h-1zM433 307h1v1h-1zM440 307h1v1h-1zM448 307h1v1h-1zM455 307h1v1h-1zM11 314h1v1h-1zM18 314h1v1h-1zM25 314h1v1h-1zM33 314h1v1h-1zM40 314h1v1h-1zM47 314h1v1h-1zM54 314h1v1h-1zM62 314h1v1h-1zM69 314h1v1h-1zM76 314h1v1h-1zM84 314h1v1h-1zM91 314h1v1h-1zM98 314h1v1h-1zM105 314h1v1h-1zM113 314h1v1h-1zM120 314h1v1h-1zM127 314h1v1h-1zM135 314h1v1h-1zM142 314h1v1h-1zM149 314h1v1h-1zM156 314h1v1h-1zM164 314h1v1h-1zM171 314h1v1h-1zM178 314h1v1h-1zM186 314h1v1h-1zM193 314h1v1h-1zM200 314h1v1h-1zM207 314h1v1h-1zM215 314h1v1h-1zM222 314h1v1h-1zM229 314h1v1h-1zM236 314h1v1h-1zM244 314h1v1h-1zM251 314h1v1h-1zM258 314h1v1h-1zM266 314h1v1h-1zM273 314h1v1h-1zM280 314h1v1h-1zM287 314h1v1h-1zM295 314h1v1h-1zM302 314h1v1h-1zM309 314h1v1h-1zM317 314h1v1h-1zM324 314h1v1h-1zM331 314h1v1h-1zM338 314h1v1h-1zM346 314h1v1h-1zM353 314h1v1h-1zM360 314h1v1h-1zM368 314h1v1h-1zM375 314h1v1h-1zM382 314h1v1h-1zM389 314h1v1h-1zM397 314h1v1h-1zM404 314h1v1h-1zM411 314h1v1h-1zM418 314h1v1h-1zM426 314h1v1h-1zM433 314h1v1h-1zM440 314h1v1h-1zM448 314h1v1h-1zM455 314h1v1h-1zM11 322h1v1h-1zM18 322h1v1h-1zM25 322h1v1h-1zM33 322h1v1h-1zM40 322h1v1h-1zM47 322h1v1h-1zM54 322h1v1h-1zM62 322h1v1h-1zM69 322h1v1h-1zM76 322h1v1h-1zM84 322h1v1h-1zM91 322h1v1h-1zM98 322h1v1h-1zM105 322h1v1h-1zM113 322h1v1h-1zM120 322h1v1h-1zM127 322h1v1h-1zM135 322h1v1h-1zM142 322h1v1h-1zM149 322h1v1h-1zM156 322h1v1h-1zM164 322h1v1h-1zM171 322h1v1h-1zM178 322h1v1h-1zM186 322h1v1h-1zM193 322h1v1h-1zM200 322h1v1h-1zM207 322h1v1h-1zM215 322h1v1h-1zM222 322h1v1h-1zM229 322h1v1h-1zM236 322h1v1h-1zM244 322h1v1h-1zM251 322h1v1h-1zM258 322h1v1h-1zM266 322h1v1h-1zM273 322h1v1h-1zM280 322h1v1h-1zM287 322h1v1h-1zM295 322h1v1h-1zM302 322h1v1h-1zM309 322h1v1h-1zM317 322h1v1h-1zM324 322h1v1h-1zM331 322h1v1h-1zM338 322h1v1h-1zM346 322h1v1h-1zM353 322h1v1h-1zM360 322h1v1h-1zM368 322h1v1h-1zM375 322h1v1h-1zM382 322h1v1h-1zM389 322h1v1h-1zM397 322h1v1h-1zM404 322h1v1h-1zM411 322h1v1h-1zM418 322h1v1h-1zM426 322h1v1h-1zM433 322h1v1h-1zM440 322h1v1h-1zM448 322h1v1h-1zM455 322h1v1h-1zM11 329h1v1h-1zM18 329h1v1h-1zM25 329h1v1h-1zM33 329h1v1h-1zM40 329h1v1h-1zM47 329h1v1h-1zM54 329h1v1h-1zM62 329h1v1h-1zM69 329h1v1h-1zM76 329h1v1h-1zM84 329h1v1h-1zM91 329h1v1h-1zM98 329h1v1h-1zM105 329h1v1h-1zM113 329h1v1h-1zM120 329h1v1h-1zM127 329h1v1h-1zM135 329h1v1h-1zM142 329h1v1h-1zM149 329h1v1h-1zM156 329h1v1h-1zM164 329h1v1h-1zM171 329h1v1h-1zM178 329h1v1h-1zM186 329h1v1h-1zM193 329h1v1h-1zM200 329h1v1h-1zM207 329h1v1h-1zM215 329h1v1h-1zM222 329h1v1h-1zM229 329h1v1h-1zM236 329h1v1h-1zM244 329h1v1h-1zM251 329h1v1h-1zM258 329h1v1h-1zM266 329h1v1h-1zM273 329h1v1h-1zM280 329h1v1h-1zM287 329h1v1h-1zM295 329h1v1h-1zM302 329h1v1h-1zM309 329h1v1h-1zM317 329h1v1h-1zM324 329h1v1h-1zM331 329h1v1h-1zM338 329h1v1h-1zM346 329h1v1h-1zM353 329h1v1h-1zM360 329h1v1h-1zM368 329h1v1h-1zM375 329h1v1h-1zM382 329h1v1h-1zM389 329h1v1h-1zM397 329h1v1h-1zM404 329h1v1h-1zM411 329h1v1h-1zM418 329h1v1h-1zM426 329h1v1h-1zM433 329h1v1h-1zM440 329h1v1h-1zM448 329h1v1h-1zM455 329h1v1h-1zM11 336h1v1h-1zM18 336h1v1h-1zM25 336h1v1h-1zM33 336h1v1h-1zM40 336h1v1h-1zM47 336h1v1h-1zM54 336h1v1h-1zM62 336h1v1h-1zM69 336h1v1h-1zM76 336h1v1h-1zM84 336h1v1h-1zM91 336h1v1h-1zM98 336h1v1h-1zM105 336h1v1h-1zM113 336h1v1h-1zM120 336h1v1h-1zM127 336h1v1h-1zM135 336h1v1h-1zM142 336h1v1h-1zM149 336h1v1h-1zM156 336h1v1h-1zM164 336h1v1h-1zM171 336h1v1h-1zM178 336h1v1h-1zM186 336h1v1h-1zM193 336h1v1h-1zM200 336h1v1h-1zM207 336h1v1h-1zM215 336h1v1h-1zM222 336h1v1h-1zM229 336h1v1h-1zM236 336h1v1h-1zM244 336h1v1h-1zM251 336h1v1h-1zM258 336h1v1h-1zM266 336h1v1h-1zM273 336h1v1h-1zM280 336h1v1h-1zM287 336h1v1h-1zM295 336h1v1h-1zM302 336h1v1h-1zM309 336h1v1h-1zM317 336h1v1h-1zM324 336h1v1h-1zM331 336h1v1h-1zM338 336h1v1h-1zM346 336h1v1h-1zM353 336h1v1h-1zM360 336h1v1h-1zM368 336h1v1h-1zM375 336h1v1h-1zM382 336h1v1h-1zM389 336h1v1h-1zM397 336h1v1h-1zM404 336h1v1h-1zM411 336h1v1h-1zM418 336h1v1h-1zM426 336h1v1h-1zM433 336h1v1h-1zM440 336h1v1h-1zM448 336h1v1h-1zM455 336h1v1h-1zM11 343h1v1h-1zM18 343h1v1h-1zM25 343h1v1h-1zM33 343h1v1h-1zM40 343h1v1h-1zM47 343h1v1h-1zM54 343h1v1h-1zM62 343h1v1h-1zM69 343h1v1h-1zM76 343h1v1h-1zM84 343h1v1h-1zM91 343h1v1h-1zM98 343h1v1h-1zM105 343h1v1h-1zM113 343h1v1h-1zM120 343h1v1h-1zM127 343h1v1h-1zM135 343h1v1h-1zM142 343h1v1h-1zM149 343h1v1h-1zM156 343h1v1h-1zM164 343h1v1h-1zM171 343h1v1h-1zM178 343h1v1h-1zM186 343h1v1h-1zM193 343h1v1h-1zM200 343h1v1h-1zM207 343h1v1h-1zM215 343h1v1h-1zM222 343h1v1h-1zM229 343h1v1h-1zM236 343h1v1h-1zM244 343h1v1h-1zM251 343h1v1h-1zM258 343h1v1h-1zM266 343h1v1h-1zM273 343h1v1h-1zM280 343h1v1h-1zM287 343h1v1h-1zM295 343h1v1h-1zM302 343h1v1h-1zM309 343h1v1h-1zM317 343h1v1h-1zM324 343h1v1h-1zM331 343h1v1h-1zM338 343h1v1h-1zM346 343h1v1h-1zM353 343h1v1h-1zM360 343h1v1h-1zM368 343h1v1h-1zM375 343h1v1h-1zM382 343h1v1h-1zM389 343h1v1h-1zM397 343h1v1h-1zM404 343h1v1h-1zM411 343h1v1h-1zM418 343h1v1h-1zM426 343h1v1h-1zM433 343h1v1h-1zM440 343h1v1h-1zM448 343h1v1h-1zM455 343h1v1h-1zM11 351h1v1h-1zM18 351h1v1h-1zM25 351h1v1h-1zM33 351h1v1h-1zM40 351h1v1h-1zM47 351h1v1h-1zM54 351h1v1h-1zM62 351h1v1h-1zM69 351h1v1h-1zM76 351h1v1h-1zM84 351h1v1h-1zM91 351h1v1h-1zM98 351h1v1h-1zM105 351h1v1h-1zM113 351h1v1h-1zM120 351h1v1h-1zM127 351h1v1h-1zM135 351h1v1h-1zM142 351h1v1h-1zM149 351h1v1h-1zM156 351h1v1h-1zM164 351h1v1h-1zM171 351h1v1h-1zM178 351h1v1h-1zM186 351h1v1h-1zM193 351h1v1h-1zM200 351h1v1h-1zM207 351h1v1h-1zM215 351h1v1h-1zM222 351h1v1h-1zM229 351h1v1h-1zM236 351h1v1h-1zM244 351h1v1h-1zM251 351h1v1h-1zM258 351h1v1h-1zM266 351h1v1h-1zM273 351h1v1h-1zM280 351h1v1h-1zM287 351h1v1h-1zM295 351h1v1h-1zM302 351h1v1h-1zM309 351h1v1h-1zM317 351h1v1h-1zM324 351h1v1h-1zM331 351h1v1h-1zM338 351h1v1h-1zM346 351h1v1h-1zM353 351h1v1h-1zM360 351h1v1h-1zM368 351h1v1h-1zM375 351h1v1h-1zM382 351h1v1h-1zM389 351h1v1h-1zM397 351h1v1h-1zM404 351h1v1h-1zM411 351h1v1h-1zM418 351h1v1h-1zM426 351h1v1h-1zM433 351h1v1h-1zM440 351h1v1h-1zM448 351h1v1h-1zM455 351h1v1h-1zM11 358h1v1h-1zM18 358h1v1h-1zM25 358h1v1h-1zM33 358h1v1h-1zM40 358h1v1h-1zM47 358h1v1h-1zM54 358h1v1h-1zM62 358h1v1h-1zM69 358h1v1h-1zM76 358h1v1h-1zM84 358h1v1h-1zM91 358h1v1h-1zM98 358h1v1h-1zM105 358h1v1h-1zM113 358h1v1h-1zM120 358h1v1h-1zM127 358h1v1h-1zM135 358h1v1h-1zM142 358h1v1h-1zM149 358h1v1h-1zM156 358h1v1h-1zM164 358h1v1h-1zM171 358h1v1h-1zM178 358h1v1h-1zM186 358h1v1h-1zM193 358h1v1h-1zM200 358h1v1h-1zM207 358h1v1h-1zM215 358h1v1h-1zM222 358h1v1h-1zM229 358h1v1h-1zM236 358h1v1h-1zM244 358h1v1h-1zM251 358h1v1h-1zM258 358h1v1h-1zM266 358h1v1h-1zM273 358h1v1h-1zM280 358h1v1h-1zM287 358h1v1h-1zM295 358h1v1h-1zM302 358h1v1h-1zM309 358h1v1h-1zM317 358h1v1h-1zM324 358h1v1h-1zM331 358h1v1h-1zM338 358h1v1h-1zM346 358h1v1h-1zM353 358h1v1h-1zM360 358h1v1h-1zM368 358h1v1h-1zM375 358h1v1h-1zM382 358h1v1h-1zM389 358h1v1h-1zM397 358h1v1h-1zM404 358h1v1h-1zM411 358h1v1h-1zM418 358h1v1h-1zM426 358h1v1h-1zM433 358h1v1h-1zM440 358h1v1h-1zM448 358h1v1h-1zM455 358h1v1h-1zM11 365h1v1h-1zM18 365h1v1h-1zM25 365h1v1h-1zM33 365h1v1h-1zM40 365h1v1h-1zM47 365h1v1h-1zM54 365h1v1h-1zM62 365h1v1h-1zM69 365h1v1h-1zM76 365h1v1h-1zM84 365h1v1h-1zM91 365h1v1h-1zM98 365h1v1h-1zM105 365h1v1h-1zM113 365h1v1h-1zM120 365h1v1h-1zM127 365h1v1h-1zM135 365h1v1h-1zM142 365h1v1h-1zM149 365h1v1h-1zM156 365h1v1h-1zM164 365h1v1h-1zM171 365h1v1h-1zM178 365h1v1h-1zM186 365h1v1h-1zM193 365h1v1h-1zM200 365h1v1h-1zM207 365h1v1h-1zM215 365h1v1h-1zM222 365h1v1h-1zM229 365h1v1h-1zM236 365h1v1h-1zM244 365h1v1h-1zM251 365h1v1h-1zM258 365h1v1h-1zM266 365h1v1h-1zM273 365h1v1h-1zM280 365h1v1h-1zM287 365h1v1h-1zM295 365h1v1h-1zM302 365h1v1h-1zM309 365h1v1h-1zM317 365h1v1h-1zM324 365h1v1h-1zM331 365h1v1h-1zM338 365h1v1h-1zM346 365h1v1h-1zM353 365h1v1h-1zM360 365h1v1h-1zM368 365h1v1h-1zM375 365h1v1h-1zM382 365h1v1h-1zM389 365h1v1h-1zM397 365h1v1h-1zM404 365h1v1h-1zM411 365h1v1h-1zM418 365h1v1h-1zM426 365h1v1h-1zM433 365h1v1h-1zM440 365h1v1h-1zM448 365h1v1h-1zM455 365h1v1h-1zM11 373h1v1h-1zM18 373h1v1h-1zM25 373h1v1h-1zM33 373h1v1h-1zM40 373h1v1h-1zM47 373h1v1h-1zM54 373h1v1h-1zM62 373h1v1h-1zM69 373h1v1h-1zM76 373h1v1h-1zM84 373h1v1h-1zM91 373h1v1h-1zM98 373h1v1h-1zM105 373h1v1h-1zM113 373h1v1h-1zM120 373h1v1h-1zM127 373h1v1h-1zM135 373h1v1h-1zM142 373h1v1h-1zM149 373h1v1h-1zM156 373h1v1h-1zM164 373h1v1h-1zM171 373h1v1h-1zM178 373h1v1h-1zM186 373h1v1h-1zM193 373h1v1h-1zM200 373h1v1h-1zM207 373h1v1h-1zM215 373h1v1h-1zM222 373h1v1h-1zM229 373h1v1h-1zM236 373h1v1h-1zM244 373h1v1h-1zM251 373h1v1h-1zM258 373h1v1h-1zM266 373h1v1h-1zM273 373h1v1h-1zM280 373h1v1h-1zM287 373h1v1h-1zM295 373h1v1h-1zM302 373h1v1h-1zM309 373h1v1h-1zM317 373h1v1h-1zM324 373h1v1h-1zM331 373h1v1h-1zM338 373h1v1h-1zM346 373h1v1h-1zM353 373h1v1h-1zM360 373h1v1h-1zM368 373h1v1h-1zM375 373h1v1h-1zM382 373h1v1h-1zM389 373h1v1h-1zM397 373h1v1h-1zM404 373h1v1h-1zM411 373h1v1h-1zM418 373h1v1h-1zM426 373h1v1h-1zM433 373h1v1h-1zM440 373h1v1h-1zM448 373h1v1h-1zM455 373h1v1h-1zM11 380h1v1h-1zM18 380h1v1h-1zM25 380h1v1h-1zM33 380h1v1h-1zM40 380h1v1h-1zM47 380h1v1h-1zM54 380h1v1h-1zM62 380h1v1h-1zM69 380h1v1h-1zM76 380h1v1h-1zM84 380h1v1h-1zM91 380h1v1h-1zM98 380h1v1h-1zM105 380h1v1h-1zM113 380h1v1h-1zM120 380h1v1h-1zM127 380h1v1h-1zM135 380h1v1h-1zM142 380h1v1h-1zM149 380h1v1h-1zM156 380h1v1h-1zM164 380h1v1h-1zM171 380h1v1h-1zM178 380h1v1h-1zM186 380h1v1h-1zM193 380h1v1h-1zM200 380h1v1h-1zM207 380h1v1h-1zM215 380h1v1h-1zM222 380h1v1h-1zM229 380h1v1h-1zM236 380h1v1h-1zM244 380h1v1h-1zM251 380h1v1h-1zM258 380h1v1h-1zM266 380h1v1h-1zM273 380h1v1h-1zM280 380h1v1h-1zM287 380h1v1h-1zM295 380h1v1h-1zM302 380h1v1h-1zM309 380h1v1h-1zM317 380h1v1h-1zM324 380h1v1h-1zM331 380h1v1h-1zM338 380h1v1h-1zM346 380h1v1h-1zM353 380h1v1h-1zM360 380h1v1h-1zM368 380h1v1h-1zM375 380h1v1h-1zM382 380h1v1h-1zM389 380h1v1h-1zM397 380h1v1h-1zM404 380h1v1h-1zM411 380h1v1h-1zM418 380h1v1h-1zM426 380h1v1h-1zM433 380h1v1h-1zM440 380h1v1h-1zM448 380h1v1h-1zM455 380h1v1h-1zM11 387h1v1h-1zM18 387h1v1h-1zM25 387h1v1h-1zM33 387h1v1h-1zM40 387h1v1h-1zM47 387h1v1h-1zM54 387h1v1h-1zM62 387h1v1h-1zM69 387h1v1h-1zM76 387h1v1h-1zM84 387h1v1h-1zM91 387h1v1h-1zM98 387h1v1h-1zM105 387h1v1h-1zM113 387h1v1h-1zM120 387h1v1h-1zM127 387h1v1h-1zM135 387h1v1h-1zM142 387h1v1h-1zM149 387h1v1h-1zM156 387h1v1h-1zM164 387h1v1h-1zM171 387h1v1h-1zM178 387h1v1h-1zM186 387h1v1h-1zM193 387h1v1h-1zM200 387h1v1h-1zM207 387h1v1h-1zM215 387h1v1h-1zM222 387h1v1h-1zM229 387h1v1h-1zM236 387h1v1h-1zM244 387h1v1h-1zM251 387h1v1h-1zM258 387h1v1h-1zM266 387h1v1h-1zM273 387h1v1h-1zM280 387h1v1h-1zM287 387h1v1h-1zM295 387h1v1h-1zM302 387h1v1h-1zM309 387h1v1h-1zM317 387h1v1h-1zM324 387h1v1h-1zM331 387h1v1h-1zM338 387h1v1h-1zM346 387h1v1h-1zM353 387h1v1h-1zM360 387h1v1h-1zM368 387h1v1h-1zM375 387h1v1h-1zM382 387h1v1h-1zM389 387h1v1h-1zM397 387h1v1h-1zM404 387h1v1h-1zM411 387h1v1h-1zM418 387h1v1h-1zM426 387h1v1h-1zM433 387h1v1h-1zM440 387h1v1h-1zM448 387h1v1h-1zM455 387h1v1h-1zM11 394h1v1h-1zM18 394h1v1h-1zM25 394h1v1h-1zM33 394h1v1h-1zM40 394h1v1h-1zM47 394h1v1h-1zM54 394h1v1h-1zM62 394h1v1h-1zM69 394h1v1h-1zM76 394h1v1h-1zM84 394h1v1h-1zM91 394h1v1h-1zM98 394h1v1h-1zM105 394h1v1h-1zM113 394h1v1h-1zM120 394h1v1h-1zM127 394h1v1h-1zM135 394h1v1h-1zM142 394h1v1h-1zM149 394h1v1h-1zM156 394h1v1h-1zM164 394h1v1h-1zM171 394h1v1h-1zM178 394h1v1h-1zM186 394h1v1h-1zM193 394h1v1h-1zM200 394h1v1h-1zM207 394h1v1h-1zM215 394h1v1h-1zM222 394h1v1h-1zM229 394h1v1h-1zM236 394h1v1h-1zM244 394h1v1h-1zM251 394h1v1h-1zM258 394h1v1h-1zM266 394h1v1h-1zM273 394h1v1h-1zM280 394h1v1h-1zM287 394h1v1h-1zM295 394h1v1h-1zM302 394h1v1h-1zM309 394h1v1h-1zM317 394h1v1h-1zM324 394h1v1h-1zM331 394h1v1h-1zM338 394h1v1h-1zM346 394h1v1h-1zM353 394h1v1h-1zM360 394h1v1h-1zM368 394h1v1h-1zM375 394h1v1h-1zM382 394h1v1h-1zM389 394h1v1h-1zM397 394h1v1h-1zM404 394h1v1h-1zM411 394h1v1h-1zM418 394h1v1h-1zM426 394h1v1h-1zM433 394h1v1h-1zM440 394h1v1h-1zM448 394h1v1h-1zM455 394h1v1h-1zM11 402h1v1h-1zM18 402h1v1h-1zM25 402h1v1h-1zM33 402h1v1h-1zM40 402h1v1h-1zM47 402h1v1h-1zM54 402h1v1h-1zM62 402h1v1h-1zM69 402h1v1h-1zM76 402h1v1h-1zM84 402h1v1h-1zM91 402h1v1h-1zM98 402h1v1h-1zM105 402h1v1h-1zM113 402h1v1h-1zM120 402h1v1h-1zM127 402h1v1h-1zM135 402h1v1h-1zM142 402h1v1h-1zM149 402h1v1h-1zM156 402h1v1h-1zM164 402h1v1h-1zM171 402h1v1h-1zM178 402h1v1h-1zM186 402h1v1h-1zM193 402h1v1h-1zM200 402h1v1h-1zM207 402h1v1h-1zM215 402h1v1h-1zM222 402h1v1h-1zM229 402h1v1h-1zM236 402h1v1h-1zM244 402h1v1h-1zM251 402h1v1h-1zM258 402h1v1h-1zM266 402h1v1h-1zM273 402h1v1h-1zM280 402h1v1h-1zM287 402h1v1h-1zM295 402h1v1h-1zM302 402h1v1h-1zM309 402h1v1h-1zM317 402h1v1h-1zM324 402h1v1h-1zM331 402h1v1h-1zM338 402h1v1h-1zM346 402h1v1h-1zM353 402h1v1h-1zM360 402h1v1h-1zM368 402h1v1h-1zM375 402h1v1h-1zM382 402h1v1h-1zM389 402h1v1h-1zM397 402h1v1h-1zM404 402h1v1h-1zM411 402h1v1h-1zM418 402h1v1h-1zM426 402h1v1h-1zM433 402h1v1h-1zM440 402h1v1h-1zM448 402h1v1h-1zM455 402h1v1h-1zM11 409h1v1h-1zM18 409h1v1h-1zM25 409h1v1h-1zM33 409h1v1h-1zM40 409h1v1h-1zM47 409h1v1h-1zM54 409h1v1h-1zM62 409h1v1h-1zM69 409h1v1h-1zM76 409h1v1h-1zM84 409h1v1h-1zM91 409h1v1h-1zM98 409h1v1h-1zM105 409h1v1h-1zM113 409h1v1h-1zM120 409h1v1h-1zM127 409h1v1h-1zM135 409h1v1h-1zM142 409h1v1h-1zM149 409h1v1h-1zM156 409h1v1h-1zM164 409h1v1h-1zM171 409h1v1h-1zM178 409h1v1h-1zM186 409h1v1h-1zM193 409h1v1h-1zM200 409h1v1h-1zM207 409h1v1h-1zM215 409h1v1h-1zM222 409h1v1h-1zM229 409h1v1h-1zM236 409h1v1h-1zM244 409h1v1h-1zM251 409h1v1h-1zM258 409h1v1h-1zM266 409h1v1h-1zM273 409h1v1h-1zM280 409h1v1h-1zM287 409h1v1h-1zM295 409h1v1h-1zM302 409h1v1h-1zM309 409h1v1h-1zM317 409h1v1h-1zM324 409h1v1h-1zM331 409h1v1h-1zM338 409h1v1h-1zM346 409h1v1h-1zM353 409h1v1h-1zM360 409h1v1h-1zM368 409h1v1h-1zM375 409h1v1h-1zM382 409h1v1h-1zM389 409h1v1h-1zM397 409h1v1h-1zM404 409h1v1h-1zM411 409h1v1h-1zM418 409h1v1h-1zM426 409h1v1h-1zM433 409h1v1h-1zM440 409h1v1h-1zM448 409h1v1h-1zM455 409h1v1h-1zM11 416h1v1h-1zM18 416h1v1h-1zM25 416h1v1h-1zM33 416h1v1h-1zM40 416h1v1h-1zM47 416h1v1h-1zM54 416h1v1h-1zM62 416h1v1h-1zM69 416h1v1h-1zM76 416h1v1h-1zM84 416h1v1h-1zM91 416h1v1h-1zM98 416h1v1h-1zM105 416h1v1h-1zM113 416h1v1h-1zM120 416h1v1h-1zM127 416h1v1h-1zM135 416h1v1h-1zM142 416h1v1h-1zM149 416h1v1h-1zM156 416h1v1h-1zM164 416h1v1h-1zM171 416h1v1h-1zM178 416h1v1h-1zM186 416h1v1h-1zM193 416h1v1h-1zM200 416h1v1h-1zM207 416h1v1h-1zM215 416h1v1h-1zM222 416h1v1h-1zM229 416h1v1h-1zM236 416h1v1h-1zM244 416h1v1h-1zM251 416h1v1h-1zM258 416h1v1h-1zM266 416h1v1h-1zM273 416h1v1h-1zM280 416h1v1h-1zM287 416h1v1h-1zM295 416h1v1h-1zM302 416h1v1h-1zM309 416h1v1h-1zM317 416h1v1h-1zM324 416h1v1h-1zM331 416h1v1h-1zM338 416h1v1h-1zM346 416h1v1h-1zM353 416h1v1h-1zM360 416h1v1h-1zM368 416h1v1h-1zM375 416h1v1h-1zM382 416h1v1h-1zM389 416h1v1h-1zM397 416h1v1h-1zM404 416h1v1h-1zM411 416h1v1h-1zM418 416h1v1h-1zM426 416h1v1h-1zM433 416h1v1h-1zM440 416h1v1h-1zM448 416h1v1h-1zM455 416h1v1h-1zM11 424h1v1h-1zM18 424h1v1h-1zM25 424h1v1h-1zM33 424h1v1h-1zM40 424h1v1h-1zM47 424h1v1h-1zM54 424h1v1h-1zM62 424h1v1h-1zM69 424h1v1h-1zM76 424h1v1h-1zM84 424h1v1h-1zM91 424h1v1h-1zM98 424h1v1h-1zM105 424h1v1h-1zM113 424h1v1h-1zM120 424h1v1h-1zM127 424h1v1h-1zM135 424h1v1h-1zM142 424h1v1h-1zM149 424h1v1h-1zM156 424h1v1h-1zM164 424h1v1h-1zM171 424h1v1h-1zM178 424h1v1h-1zM186 424h1v1h-1zM193 424h1v1h-1zM200 424h1v1h-1zM207 424h1v1h-1zM215 424h1v1h-1zM222 424h1v1h-1zM229 424h1v1h-1zM236 424h1v1h-1zM244 424h1v1h-1zM251 424h1v1h-1zM258 424h1v1h-1zM266 424h1v1h-1zM273 424h1v1h-1zM280 424h1v1h-1zM287 424h1v1h-1zM295 424h1v1h-1zM302 424h1v1h-1zM309 424h1v1h-1zM317 424h1v1h-1zM324 424h1v1h-1zM331 424h1v1h-1zM338 424h1v1h-1zM346 424h1v1h-1zM353 424h1v1h-1zM360 424h1v1h-1zM368 424h1v1h-1zM375 424h1v1h-1zM382 424h1v1h-1zM389 424h1v1h-1zM397 424h1v1h-1zM404 424h1v1h-1zM411 424h1v1h-1zM418 424h1v1h-1zM426 424h1v1h-1zM433 424h1v1h-1zM440 424h1v1h-1zM448 424h1v1h-1zM455 424h1v1h-1zM11 431h1v1h-1zM18 431h1v1h-1zM25 431h1v1h-1zM33 431h1v1h-1zM40 431h1v1h-1zM47 431h1v1h-1zM54 431h1v1h-1zM62 431h1v1h-1zM69 431h1v1h-1zM76 431h1v1h-1zM84 431h1v1h-1zM91 431h1v1h-1zM98 431h1v1h-1zM105 431h1v1h-1zM113 431h1v1h-1zM120 431h1v1h-1zM127 431h1v1h-1zM135 431h1v1h-1zM142 431h1v1h-1zM149 431h1v1h-1zM156 431h1v1h-1zM164 431h1v1h-1zM171 431h1v1h-1zM178 431h1v1h-1zM186 431h1v1h-1zM193 431h1v1h-1zM200 431h1v1h-1zM207 431h1v1h-1zM215 431h1v1h-1zM222 431h1v1h-1zM229 431h1v1h-1zM236 431h1v1h-1zM244 431h1v1h-1zM251 431h1v1h-1zM258 431h1v1h-1zM266 431h1v1h-1zM273 431h1v1h-1zM280 431h1v1h-1zM287 431h1v1h-1zM295 431h1v1h-1zM302 431h1v1h-1zM309 431h1v1h-1zM317 431h1v1h-1zM324 431h1v1h-1zM331 431h1v1h-1zM338 431h1v1h-1zM346 431h1v1h-1zM353 431h1v1h-1zM360 431h1v1h-1zM368 431h1v1h-1zM375 431h1v1h-1zM382 431h1v1h-1zM389 431h1v1h-1zM397 431h1v1h-1zM404 431h1v1h-1zM411 431h1v1h-1zM418 431h1v1h-1zM426 431h1v1h-1zM433 431h1v1h-1zM440 431h1v1h-1zM448 431h1v1h-1zM455 431h1v1h-1zM11 438h1v1h-1zM18 438h1v1h-1zM25 438h1v1h-1zM33 438h1v1h-1zM40 438h1v1h-1zM47 438h1v1h-1zM54 438h1v1h-1zM62 438h1v1h-1zM69 438h1v1h-1zM76 438h1v1h-1zM84 438h1v1h-1zM91 438h1v1h-1zM98 438h1v1h-1zM105 438h1v1h-1zM113 438h1v1h-1zM120 438h1v1h-1zM127 438h1v1h-1zM135 438h1v1h-1zM142 438h1v1h-1zM149 438h1v1h-1zM156 438h1v1h-1zM164 438h1v1h-1zM171 438h1v1h-1zM178 438h1v1h-1zM186 438h1v1h-1zM193 438h1v1h-1zM200 438h1v1h-1zM207 438h1v1h-1zM215 438h1v1h-1zM222 438h1v1h-1zM229 438h1v1h-1zM236 438h1v1h-1zM244 438h1v1h-1zM251 438h1v1h-1zM258 438h1v1h-1zM266 438h1v1h-1zM273 438h1v1h-1zM280 438h1v1h-1zM287 438h1v1h-1zM295 438h1v1h-1zM302 438h1v1h-1zM309 438h1v1h-1zM317 438h1v1h-1zM324 438h1v1h-1zM331 438h1v1h-1zM338 438h1v1h-1zM346 438h1v1h-1zM353 438h1v1h-1zM360 438h1v1h-1zM368 438h1v1h-1zM375 438h1v1h-1zM382 438h1v1h-1zM389 438h1v1h-1zM397 438h1v1h-1zM404 438h1v1h-1zM411 438h1v1h-1zM418 438h1v1h-1zM426 438h1v1h-1zM433 438h1v1h-1zM440 438h1v1h-1zM448 438h1v1h-1zM455 438h1v1h-1zM11 445h1v1h-1zM18 445h1v1h-1zM25 445h1v1h-1zM33 445h1v1h-1zM40 445h1v1h-1zM47 445h1v1h-1zM54 445h1v1h-1zM62 445h1v1h-1zM69 445h1v1h-1zM76 445h1v1h-1zM84 445h1v1h-1zM91 445h1v1h-1zM98 445h1v1h-1zM105 445h1v1h-1zM113 445h1v1h-1zM120 445h1v1h-1zM127 445h1v1h-1zM135 445h1v1h-1zM142 445h1v1h-1zM149 445h1v1h-1zM156 445h1v1h-1zM164 445h1v1h-1zM171 445h1v1h-1zM178 445h1v1h-1zM186 445h1v1h-1zM193 445h1v1h-1zM200 445h1v1h-1zM207 445h1v1h-1zM215 445h1v1h-1zM222 445h1v1h-1zM229 445h1v1h-1zM236 445h1v1h-1zM244 445h1v1h-1zM251 445h1v1h-1zM258 445h1v1h-1zM266 445h1v1h-1zM273 445h1v1h-1zM280 445h1v1h-1zM287 445h1v1h-1zM295 445h1v1h-1zM302 445h1v1h-1zM309 445h1v1h-1zM317 445h1v1h-1zM324 445h1v1h-1zM331 445h1v1h-1zM338 445h1v1h-1zM346 445h1v1h-1zM353 445h1v1h-1zM360 445h1v1h-1zM368 445h1v1h-1zM375 445h1v1h-1zM382 445h1v1h-1zM389 445h1v1h-1zM397 445h1v1h-1zM404 445h1v1h-1zM411 445h1v1h-1zM418 445h1v1h-1zM426 445h1v1h-1zM433 445h1v1h-1zM440 445h1v1h-1zM448 445h1v1h-1zM455 445h1v1h-1zM11 453h1v1h-1zM18 453h1v1h-1zM25 453h1v1h-1zM33 453h1v1h-1zM40 453h1v1h-1zM47 453h1v1h-1zM54 453h1v1h-1zM62 453h1v1h-1zM69 453h1v1h-1zM76 453h1v1h-1zM84 453h1v1h-1zM91 453h1v1h-1zM98 453h1v1h-1zM105 453h1v1h-1zM113 453h1v1h-1zM120 453h1v1h-1zM127 453h1v1h-1zM135 453h1v1h-1zM142 453h1v1h-1zM149 453h1v1h-1zM156 453h1v1h-1zM164 453h1v1h-1zM171 453h1v1h-1zM178 453h1v1h-1zM186 453h1v1h-1zM193 453h1v1h-1zM200 453h1v1h-1zM207 453h1v1h-1zM215 453h1v1h-1zM222 453h1v1h-1zM229 453h1v1h-1zM236 453h1v1h-1zM244 453h1v1h-1zM251 453h1v1h-1zM258 453h1v1h-1zM266 453h1v1h-1zM273 453h1v1h-1zM280 453h1v1h-1zM287 453h1v1h-1zM295 453h1v1h-1zM302 453h1v1h-1zM309 453h1v1h-1zM317 453h1v1h-1zM324 453h1v1h-1zM331 453h1v1h-1zM338 453h1v1h-1zM346 453h1v1h-1zM353 453h1v1h-1zM360 453h1v1h-1zM368 453h1v1h-1zM375 453h1v1h-1zM382 453h1v1h-1zM389 453h1v1h-1zM397 453h1v1h-1zM404 453h1v1h-1zM411 453h1v1h-1zM418 453h1v1h-1zM426 453h1v1h-1zM433 453h1v1h-1zM440 453h1v1h-1zM448 453h1v1h-1zM455 453h1v1h-1zM11 460h1v1h-1zM18 460h1v1h-1zM25 460h1v1h-1zM33 460h1v1h-1zM40 460h1v1h-1zM47 460h1v1h-1zM54 460h1v1h-1zM62 460h1v1h-1zM69 460h1v1h-1zM76 460h1v1h-1zM84 460h1v1h-1zM91 460h1v1h-1zM98 460h1v1h-1zM105 460h1v1h-1zM113 460h1v1h-1zM120 460h1v1h-1zM127 460h1v1h-1zM135 460h1v1h-1zM142 460h1v1h-1zM149 460h1v1h-1zM156 460h1v1h-1zM164 460h1v1h-1zM171 460h1v1h-1zM178 460h1v1h-1zM186 460h1v1h-1zM193 460h1v1h-1zM200 460h1v1h-1zM207 460h1v1h-1zM215 460h1v1h-1zM222 460h1v1h-1zM229 460h1v1h-1zM236 460h1v1h-1zM244 460h1v1h-1zM251 460h1v1h-1zM258 460h1v1h-1zM266 460h1v1h-1zM273 460h1v1h-1zM280 460h1v1h-1zM287 460h1v1h-1zM295 460h1v1h-1zM302 460h1v1h-1zM309 460h1v1h-1zM317 460h1v1h-1zM324 460h1v1h-1zM331 460h1v1h-1zM338 460h1v1h-1zM346 460h1v1h-1zM353 460h1v1h-1zM360 460h1v1h-1zM368 460h1v1h-1zM375 460h1v1h-1zM382 460h1v1h-1zM389 460h1v1h-1zM397 460h1v1h-1zM404 460h1v1h-1zM411 460h1v1h-1zM418 460h1v1h-1zM426 460h1v1h-1zM433 460h1v1h-1zM440 460h1v1h-1zM448 460h1v1h-1zM455 460h1v1h-1zM11 467h1v1h-1zM18 467h1v1h-1zM25 467h1v1h-1zM33 467h1v1h-1zM40 467h1v1h-1zM47 467h1v1h-1zM54 467h1v1h-1zM62 467h1v1h-1zM69 467h1v1h-1zM76 467h1v1h-1zM84 467h1v1h-1zM91 467h1v1h-1zM98 467h1v1h-1zM105 467h1v1h-1zM113 467h1v1h-1zM120 467h1v1h-1zM127 467h1v1h-1zM135 467h1v1h-1zM142 467h1v1h-1zM149 467h1v1h-1zM156 467h1v1h-1zM164 467h1v1h-1zM171 467h1v1h-1zM178 467h1v1h-1zM186 467h1v1h-1zM193 467h1v1h-1zM200 467h1v1h-1zM207 467h1v1h-1zM215 467h1v1h-1zM222 467h1v1h-1zM229 467h1v1h-1zM236 467h1v1h-1zM244 467h1v1h-1zM251 467h1v1h-1zM258 467h1v1h-1zM266 467h1v1h-1zM273 467h1v1h-1zM280 467h1v1h-1zM287 467h1v1h-1zM295 467h1v1h-1zM302 467h1v1h-1zM309 467h1v1h-1zM317 467h1v1h-1zM324 467h1v1h-1zM331 467h1v1h-1zM338 467h1v1h-1zM346 467h1v1h-1zM353 467h1v1h-1zM360 467h1v1h-1zM368 467h1v1h-1zM375 467h1v1h-1zM382 467h1v1h-1zM389 467h1v1h-1zM397 467h1v1h-1zM404 467h1v1h-1zM411 467h1v1h-1zM418 467h1v1h-1zM426 467h1v1h-1zM433 467h1v1h-1zM440 467h1v1h-1zM448 467h1v1h-1zM455 467h1v1h-1zM11 475h1v1h-1zM18 475h1v1h-1zM25 475h1v1h-1zM33 475h1v1h-1zM40 475h1v1h-1zM47 475h1v1h-1zM54 475h1v1h-1zM62 475h1v1h-1zM69 475h1v1h-1zM76 475h1v1h-1zM84 475h1v1h-1zM91 475h1v1h-1zM98 475h1v1h-1zM105 475h1v1h-1zM113 475h1v1h-1zM120 475h1v1h-1zM127 475h1v1h-1zM135 475h1v1h-1zM142 475h1v1h-1zM149 475h1v1h-1zM156 475h1v1h-1zM164 475h1v1h-1zM171 475h1v1h-1zM178 475h1v1h-1zM186 475h1v1h-1zM193 475h1v1h-1zM200 475h1v1h-1zM207 475h1v1h-1zM215 475h1v1h-1zM222 475h1v1h-1zM229 475h1v1h-1zM236 475h1v1h-1zM244 475h1v1h-1zM251 475h1v1h-1zM258 475h1v1h-1zM266 475h1v1h-1zM273 475h1v1h-1zM280 475h1v1h-1zM287 475h1v1h-1zM295 475h1v1h-1zM302 475h1v1h-1zM309 475h1v1h-1zM317 475h1v1h-1zM324 475h1v1h-1zM331 475h1v1h-1zM338 475h1v1h-1zM346 475h1v1h-1zM353 475h1v1h-1zM360 475h1v1h-1zM368 475h1v1h-1zM375 475h1v1h-1zM382 475h1v1h-1zM389 475h1v1h-1zM397 475h1v1h-1zM404 475h1v1h-1zM411 475h1v1h-1zM418 475h1v1h-1zM426 475h1v1h-1zM433 475h1v1h-1zM440 475h1v1h-1zM448 475h1v1h-1zM455 475h1v1h-1zM11 482h1v1h-1zM18 482h1v1h-1zM25 482h1v1h-1zM33 482h1v1h-1zM40 482h1v1h-1zM47 482h1v1h-1zM54 482h1v1h-1zM62 482h1v1h-1zM69 482h1v1h-1zM76 482h1v1h-1zM84 482h1v1h-1zM91 482h1v1h-1zM98 482h1v1h-1zM105 482h1v1h-1zM113 482h1v1h-1zM120 482h1v1h-1zM127 482h1v1h-1zM135 482h1v1h-1zM142 482h1v1h-1zM149 482h1v1h-1zM156 482h1v1h-1zM164 482h1v1h-1zM171 482h1v1h-1zM178 482h1v1h-1zM186 482h1v1h-1zM193 482h1v1h-1zM200 482h1v1h-1zM207 482h1v1h-1zM215 482h1v1h-1zM222 482h1v1h-1zM229 482h1v1h-1zM236 482h1v1h-1zM244 482h1v1h-1zM251 482h1v1h-1zM258 482h1v1h-1zM266 482h1v1h-1zM273 482h1v1h-1zM280 482h1v1h-1zM287 482h1v1h-1zM295 482h1v1h-1zM302 482h1v1h-1zM309 482h1v1h-1zM317 482h1v1h-1zM324 482h1v1h-1zM331 482h1v1h-1zM338 482h1v1h-1zM346 482h1v1h-1zM353 482h1v1h-1zM360 482h1v1h-1zM368 482h1v1h-1zM375 482h1v1h-1zM382 482h1v1h-1zM389 482h1v1h-1zM397 482h1v1h-1zM404 482h1v1h-1zM411 482h1v1h-1zM418 482h1v1h-1zM426 482h1v1h-1zM433 482h1v1h-1zM440 482h1v1h-1zM448 482h1v1h-1zM455 482h1v1h-1zM11 489h1v1h-1zM18 489h1v1h-1zM25 489h1v1h-1zM33 489h1v1h-1zM40 489h1v1h-1zM47 489h1v1h-1zM54 489h1v1h-1zM62 489h1v1h-1zM69 489h1v1h-1zM76 489h1v1h-1zM84 489h1v1h-1zM91 489h1v1h-1zM98 489h1v1h-1zM105 489h1v1h-1zM113 489h1v1h-1zM120 489h1v1h-1zM127 489h1v1h-1zM135 489h1v1h-1zM142 489h1v1h-1zM149 489h1v1h-1zM156 489h1v1h-1zM164 489h1v1h-1zM171 489h1v1h-1zM178 489h1v1h-1zM186 489h1v1h-1zM193 489h1v1h-1zM200 489h1v1h-1zM207 489h1v1h-1zM215 489h1v1h-1zM222 489h1v1h-1zM229 489h1v1h-1zM236 489h1v1h-1zM244 489h1v1h-1zM251 489h1v1h-1zM258 489h1v1h-1zM266 489h1v1h-1zM273 489h1v1h-1zM280 489h1v1h-1zM287 489h1v1h-1zM295 489h1v1h-1zM302 489h1v1h-1zM309 489h1v1h-1zM317 489h1v1h-1zM324 489h1v1h-1zM331 489h1v1h-1zM338 489h1v1h-1zM346 489h1v1h-1zM353 489h1v1h-1zM360 489h1v1h-1zM368 489h1v1h-1zM375 489h1v1h-1zM382 489h1v1h-1zM389 489h1v1h-1zM397 489h1v1h-1zM404 489h1v1h-1zM411 489h1v1h-1zM418 489h1v1h-1zM426 489h1v1h-1zM433 489h1v1h-1zM440 489h1v1h-1zM448 489h1v1h-1zM455 489h1v1h-1z"/><rect x="11.5" y="116.5" width="378" height="371" fill="none" stroke="#62C28E" stroke-width="1"/><circle cx="24.5" cy="130.5" r="6.6" fill="#FFFF00"/><circle cx="374.5" cy="130.5" r="6.6" fill="#FFFF00"/><circle cx="24.5" cy="472.5" r="6.6" fill="#FFFF00"/><circle cx="374.5" cy="472.5" r="6.6" fill="#FFFF00"/></svg>
<div class="a" style="left:461px;top:112px;width:1px;height:381px;background:#fff;"></div>
<div class="a" style="left:465px;top:115px;width:205px;height:336px;border-left:1px solid #000;border-top:1px solid #000;border-right:1px solid #000;border-bottom:1px solid #000;overflow:hidden">
</div>
<svg class="a" style="left:0;top:0" width="677" height="577">
<path d="M466 142.5H470L475.5 120.5H525.5L530.5 142.5H537.5L543 120.5H593L598.5 142.5H604L610 120.5H660.5L666.5 142.5H669" fill="none" stroke="#000" stroke-width="1"/>
</svg>
<div class="a ui" style="left:481.5px;top:124.4px;">Options</div>
<div class="a ui" style="left:557px;top:124.8px;">Find</div>
<div class="a ui" style="left:617px;top:124.4px;">Visibility</div>
<div class="a" style="left:474px;top:156px;width:187px;height:228px;border:1px solid #ACA899;box-shadow:inset 1px 1px 0 #fff,1px 1px 0 #fff"></div>
<div class="a" style="left:480px;top:150px;width:119px;height:12px;background:#ECE9D8;"></div>
<div class="a ui" style="left:481.5px;top:149.8px;">Design Object Find Filter</div>
<div class="a" style="left:480px;top:167px;width:45px;height:16px;background:#ECE9D8;box-shadow:inset 1px 1px 0 #fff,inset -1px -1px 0 #716F64,inset -2px -2px 0 #ACA899"></div>
<div class="a ui dis" style="left:488px;top:168.6px;">All On</div>
<div class="a" style="left:536px;top:167px;width:49px;height:16px;background:#ECE9D8;box-shadow:inset 1px 1px 0 #fff,inset -1px -1px 0 #716F64,inset -2px -2px 0 #ACA899"></div>
<div class="a ui dis" style="left:545.5px;top:168.6px;">All Off</div>
<div class="a" style="left:480px;top:190px;width:13px;height:13px;background:#ECE9D8;box-shadow:inset 1px 1px 0 #ACA899,inset 2px 2px 0 #716F64,inset -1px -1px 0 #fff,inset -2px -2px 0 #F1EFE2"></div>
<div class="a ui dis" style="left:498.5px;top:189.4px;">Groups</div>
<div class="a" style="left:564px;top:190px;width:13px;height:13px;background:#ECE9D8;box-shadow:inset 1px 1px 0 #ACA899,inset 2px 2px 0 #716F64,inset -1px -1px 0 #fff,inset -2px -2px 0 #F1EFE2"></div>
<div class="a ui dis" style="left:582.5px;top:189.4px;">Shapes</div>
<div class="a" style="left:480px;top:212px;width:13px;height:13px;background:#ECE9D8;box-shadow:inset 1px 1px 0 #ACA899,inset 2px 2px 0 #716F64,inset -1px -1px 0 #fff,inset -2px -2px 0 #F1EFE2"></div>
<div class="a ui dis" style="left:498.5px;top:211.4px;">Comps</div>
<div class="a" style="left:564px;top:212px;width:13px;height:13px;background:#ECE9D8;box-shadow:inset 1px 1px 0 #ACA899,inset 2px 2px 0 #716F64,inset -1px -1px 0 #fff,inset -2px -2px 0 #F1EFE2"></div>
<div class="a ui dis" style="left:582.5px;top:211.4px;">Voids</div>
<div class="a" style="left:480px;top:234px;width:13px;height:13px;background:#ECE9D8;box-shadow:inset 1px 1px 0 #ACA899,inset 2px 2px 0 #716F64,inset -1px -1px 0 #fff,inset -2px -2px 0 #F1EFE2"></div>
<div class="a ui dis" style="left:498.5px;top:233.4px;">Symbols</div>
<div class="a" style="left:564px;top:234px;width:13px;height:13px;background:#ECE9D8;box-shadow:inset 1px 1px 0 #ACA899,inset 2px 2px 0 #716F64,inset -1px -1px 0 #fff,inset -2px -2px 0 #F1EFE2"></div>
<div class="a ui dis" style="left:582.5px;top:233.4px;">Cline Segs</div>
<div class="a" style="left:480px;top:257px;width:13px;height:13px;background:#ECE9D8;box-shadow:inset 1px 1px 0 #ACA899,inset 2px 2px 0 #716F64,inset -1px -1px 0 #fff,inset -2px -2px 0 #F1EFE2"></div>
<div class="a ui dis" style="left:498.5px;top:256.4px;">Functions</div>
<div class="a" style="left:564px;top:257px;width:13px;height:13px;background:#ECE9D8;box-shadow:inset 1px 1px 0 #ACA899,inset 2px 2px 0 #716F64,inset -1px -1px 0 #fff,inset -2px -2px 0 #F1EFE2"></div>
<div class="a ui dis" style="left:582.5px;top:256.4px;">Other Segs</div>
<div class="a" style="left:480px;top:278px;width:13px;height:13px;background:#ECE9D8;box-shadow:inset 1px 1px 0 #ACA899,inset 2px 2px 0 #716F64,inset -1px -1px 0 #fff,inset -2px -2px 0 #F1EFE2"></div>
<div class="a ui dis" style="left:498.5px;top:277.4px;">Nets</div>
<div class="a" style="left:564px;top:278px;width:13px;height:13px;background:#ECE9D8;box-shadow:inset 1px 1px 0 #ACA899,inset 2px 2px 0 #716F64,inset -1px -1px 0 #fff,inset -2px -2px 0 #F1EFE2"></div>
<div class="a ui dis" style="left:582.5px;top:277.4px;">Figures</div>
<div class="a" style="left:480px;top:300px;width:13px;height:13px;background:#ECE9D8;box-shadow:inset 1px 1px 0 #ACA899,inset 2px 2px 0 #716F64,inset -1px -1px 0 #fff,inset -2px -2px 0 #F1EFE2"></div>
<div class="a ui dis" style="left:498.5px;top:299.4px;">Pins</div>
<div class="a" style="left:564px;top:300px;width:13px;height:13px;background:#ECE9D8;box-shadow:inset 1px 1px 0 #ACA899,inset 2px 2px 0 #716F64,inset -1px -1px 0 #fff,inset -2px -2px 0 #F1EFE2"></div>
<div class="a ui dis" style="left:582.5px;top:299.4px;">DRC errors</div>
<div class="a" style="left:480px;top:322px;width:13px;height:13px;background:#ECE9D8;box-shadow:inset 1px 1px 0 #ACA899,inset 2px 2px 0 #716F64,inset -1px -1px 0 #fff,inset -2px -2px 0 #F1EFE2"></div>
<div class="a ui dis" style="left:498.5px;top:321.4px;">Vias</div>
<div class="a" style="left:564px;top:322px;width:13px;height:13px;background:#ECE9D8;box-shadow:inset 1px 1px 0 #ACA899,inset 2px 2px 0 #716F64,inset -1px -1px 0 #fff,inset -2px -2px 0 #F1EFE2"></div>
<div class="a ui dis" style="left:582.5px;top:321.4px;">Text</div>
<div class="a" style="left:480px;top:344px;width:13px;height:13px;background:#ECE9D8;box-shadow:inset 1px 1px 0 #ACA899,inset 2px 2px 0 #716F64,inset -1px -1px 0 #fff,inset -2px -2px 0 #F1EFE2"></div>
<div class="a ui dis" style="left:498.5px;top:343.4px;">Clines</div>
<div class="a" style="left:564px;top:344px;width:13px;height:13px;background:#ECE9D8;box-shadow:inset 1px 1px 0 #ACA899,inset 2px 2px 0 #716F64,inset -1px -1px 0 #fff,inset -2px -2px 0 #F1EFE2"></div>
<div class="a ui dis" style="left:582.5px;top:343.4px;">Ratsnests</div>
<div class="a" style="left:480px;top:366px;width:13px;height:13px;background:#ECE9D8;box-shadow:inset 1px 1px 0 #ACA899,inset 2px 2px 0 #716F64,inset -1px -1px 0 #fff,inset -2px -2px 0 #F1EFE2"></div>
<div class="a ui dis" style="left:498.5px;top:365.4px;">Lines</div>
<div class="a" style="left:564px;top:366px;width:13px;height:13px;background:#ECE9D8;box-shadow:inset 1px 1px 0 #ACA899,inset 2px 2px 0 #716F64,inset -1px -1px 0 #fff,inset -2px -2px 0 #F1EFE2"></div>
<div class="a ui dis" style="left:582.5px;top:365.4px;">Rat Ts</div>
<div class="a" style="left:474px;top:398px;width:187px;height:80px;border:1px solid #ACA899;box-shadow:inset 1px 1px 0 #fff,1px 1px 0 #fff"></div>
<div class="a" style="left:480px;top:392px;width:71px;height:12px;background:#ECE9D8;"></div>
<div class="a ui" style="left:482.5px;top:391.6px;">Find By Name</div>
<div class="a" style="left:480px;top:408px;width:120px;height:19px;background:#ECE9D8;box-shadow:inset 1px 1px 0 #ACA899,inset 2px 2px 0 #716F64,inset -1px -1px 0 #fff,inset -2px -2px 0 #F1EFE2"></div>
<div class="a ui dis" style="left:484.5px;top:411.6px;">Symbol</div>
<div class="a" style="left:583px;top:410px;width:15px;height:15px;background:#ECE9D8;box-shadow:inset 1px 1px 0 #fff,inset -1px -1px 0 #716F64,inset -2px -2px 0 #ACA899"></div>
<svg class="a" style="left:586px;top:415px" width="9" height="5"><path d="M0 0H7L3.5 4z" fill="#ACA899"/></svg>
<div class="a" style="left:606px;top:408px;width:51px;height:19px;background:#ECE9D8;box-shadow:inset 1px 1px 0 #ACA899,inset 2px 2px 0 #716F64,inset -1px -1px 0 #fff,inset -2px -2px 0 #F1EFE2"></div>
<div class="a ui dis" style="left:610.5px;top:411.6px;">Name</div>
<div class="a" style="left:640px;top:410px;width:15px;height:15px;background:#ECE9D8;box-shadow:inset 1px 1px 0 #fff,inset -1px -1px 0 #716F64,inset -2px -2px 0 #ACA899"></div>
<svg class="a" style="left:643px;top:415px" width="9" height="5"><path d="M0 0H7L3.5 4z" fill="#ACA899"/></svg>
<div class="a" style="left:495px;top:430px;width:105px;height:30px;background:#ECE9D8;box-shadow:inset 1px 1px 0 #ACA899,inset 2px 2px 0 #716F64,inset -1px -1px 0 #fff,inset -2px -2px 0 #F1EFE2"></div>
<svg class="a" style="left:0;top:0" width="677" height="577"><path d="M481 437.5L484.5 440.5L481 443.5" fill="none" stroke="#000" stroke-width="1"/></svg>
<div class="a" style="left:606px;top:430px;width:51px;height:30px;background:#ECE9D8;box-shadow:inset 1px 1px 0 #fff,inset -1px -1px 0 #716F64,inset -2px -2px 0 #ACA899"></div>
<div class="a ui dis" style="left:614.5px;top:434.8px;">More...</div>
<div class="a" style="left:466px;top:451px;width:206px;height:3px;background:#ECE9D8;"></div>
<div class="a" style="left:465px;top:450px;width:205px;height:1px;background:#000;"></div>
<div class="a" style="left:465px;top:115px;width:1px;height:336px;background:#000;"></div>
<div class="a" style="left:669px;top:115px;width:1px;height:336px;background:#000;"></div>
<div class="a" style="left:467px;top:454px;width:201px;height:1px;background:#D8D5C8;"></div>
<div class="a" style="left:467px;top:454px;width:1px;height:36px;background:#F4F3EE;"></div>
<div class="a" style="left:468px;top:455px;width:199px;height:34px;background:#000;"></div>
<div class="a" style="left:467px;top:490px;width:202px;height:1px;background:#ACA899;"></div>
<div class="a" style="left:668px;top:454px;width:1px;height:37px;background:#ACA899;"></div>
<div class="a" style="left:466px;top:491px;width:204px;height:1px;background:#fff;"></div>
<div class="a" style="left:669px;top:453px;width:1px;height:39px;background:#fff;"></div>
<svg class="a" style="left:0;top:0" width="677" height="577">
<rect x="475.5" y="461.5" width="18" height="17" fill="none" stroke="#D8508A"/>
<rect x="493" y="461" width="1" height="18" fill="#5DC58A"/>
<rect x="496" y="461" width="1" height="16" fill="#fff"/>
</svg>
<div class="a" style="left:4px;top:493px;width:456px;height:5px;background:#ECE9D8;"></div>
<div class="a" style="left:4px;top:495px;width:458px;height:1px;background:#D8D6CA;"></div>
<div class="a" style="left:7px;top:498px;width:441px;height:72px;background:#fff;border:1px solid #000"></div>
<div class="a ui" style="left:9.5px;top:500.7px;">netrev completed successfully - use Viewlog to review the log file.</div>
<div class="a ui" style="left:9.5px;top:513.7px;">Opening existing drawing...</div>
<div class="a ui" style="left:9.5px;top:526.7px;">Grids are drawn 100.00, 100.00 apart for enhanced viewability.</div>
<div class="a ui" style="left:9.5px;top:539.7px;">netrev completed successfully - use Viewlog to review the log file.</div>
<div class="a ui" style="left:9.5px;top:552.7px;">Command &gt;</div>
<div class="a" style="left:450px;top:498px;width:14px;height:72px;background:#F4F3EE;"></div>
<div class="a" style="left:450px;top:499px;width:14px;height:15px;background:linear-gradient(135deg,#D8E3FD,#BACBF6);border-radius:2px;box-shadow:0 1px 0 #9DB0DA"></div>
<svg class="a" style="left:450px;top:499px" width="14" height="15"><path d="M3 9L7 5L11 9" fill="none" stroke="#4D6185" stroke-width="2.4"/></svg>
<div class="a" style="left:450px;top:546px;width:14px;height:6px;background:#C5D4F8;border-radius:2px;box-shadow:0 1px 0 #9DB0DA"></div>
<div class="a" style="left:450px;top:554px;width:14px;height:15px;background:linear-gradient(135deg,#D8E3FD,#BACBF6);border-radius:2px;box-shadow:0 1px 0 #9DB0DA"></div>
<svg class="a" style="left:450px;top:554px" width="14" height="15"><path d="M3 5L7 9L11 5" fill="none" stroke="#4D6185" stroke-width="2.4"/></svg>
<div class="a" style="left:465px;top:498px;width:205px;height:72px;background:#ECE9D8;border:1px solid #000"></div>
<div class="a" style="left:474px;top:502px;width:12px;height:13px;background:#00E400;border:1px solid #000"></div>
<div class="a ui" style="left:487.5px;top:503.8px;font-size:11.25px">Cmd:</div>
<div class="a ui" style="left:522px;top:503.8px;font-size:11.25px">Idle</div>
<div class="a" style="left:473px;top:523px;width:18px;height:16px;background:#ECE9D8;box-shadow:inset 1px 1px 0 #fff,inset -1px -1px 0 #716F64,inset -2px -2px 0 #ACA899"></div>
<div class="a ui" style="left:478px;top:525.0px;">P</div>
<div class="a" style="left:494px;top:523px;width:18px;height:16px;background:#ECE9D8;box-shadow:inset 1px 1px 0 #fff,inset -1px -1px 0 #716F64,inset -2px -2px 0 #ACA899"></div>
<div class="a ui" style="left:499px;top:525.0px;">A</div>
<div class="a ui" style="left:514px;top:525.0px;font-size:11.25px">7900.00, 7950.00</div>
<div class="a" style="left:620px;top:545px;width:42px;height:16px;background:#ECE9D8;box-shadow:inset 1px 1px 0 #fff,inset -1px -1px 0 #716F64,inset -2px -2px 0 #ACA899"></div>
<div class="a ui dis" style="left:631px;top:546.2px;">Stop</div>
<div class="a" style="left:670px;top:52px;width:2px;height:519px;background:#ECE9D8;"></div>
<div class="a" style="left:4px;top:52px;width:1px;height:519px;background:#F4F3EC;"></div>
</body></html>
